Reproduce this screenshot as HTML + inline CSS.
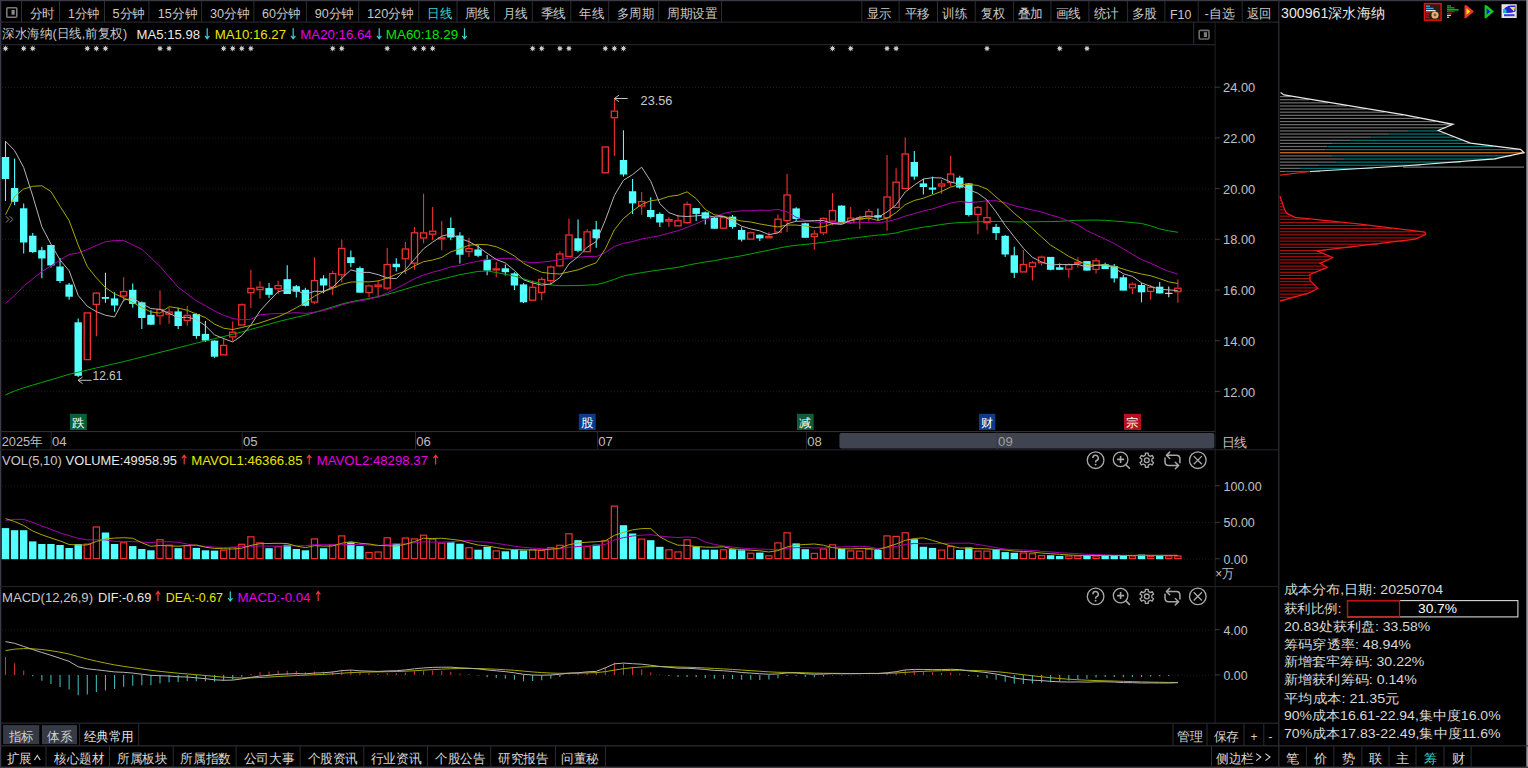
<!DOCTYPE html>
<html><head><meta charset="utf-8"><title>深水海纳</title>
<style>
html,body{margin:0;padding:0;background:#000;}
body{width:1528px;height:768px;overflow:hidden;position:relative;font-family:"Liberation Sans",sans-serif;}
svg{position:absolute;left:0;top:0;display:block;}
text{font-family:"Liberation Sans",sans-serif;}
</style></head><body>
<svg width="1528" height="768" viewBox="0 0 1528 768">
<rect x="0" y="0" width="1528" height="1.2" fill="#3a3b46"/>
<rect x="0" y="0" width="1.3" height="768" fill="#3a3b48"/>
<rect x="1526.3" y="0" width="1.7" height="768" fill="#9a9aa2"/>
<rect x="0" y="766.6" width="1528" height="1.4" fill="#3a3b46"/>
<rect x="0" y="21.6" width="1279" height="1" fill="#2c2d36"/>
<rect x="21" y="1" width="1" height="21" fill="#2c2d36"/>
<rect x="59" y="1" width="1" height="21" fill="#2c2d36"/>
<rect x="104" y="1" width="1" height="21" fill="#2c2d36"/>
<rect x="148.4" y="1" width="1" height="21" fill="#2c2d36"/>
<rect x="201.1" y="1" width="1" height="21" fill="#2c2d36"/>
<rect x="253.4" y="1" width="1" height="21" fill="#2c2d36"/>
<rect x="305.9" y="1" width="1" height="21" fill="#2c2d36"/>
<rect x="358.2" y="1" width="1" height="21" fill="#2c2d36"/>
<rect x="418.3" y="1" width="1" height="21" fill="#2c2d36"/>
<rect x="456.5" y="1" width="1" height="21" fill="#2c2d36"/>
<rect x="494" y="1" width="1" height="21" fill="#2c2d36"/>
<rect x="531.8" y="1" width="1" height="21" fill="#2c2d36"/>
<rect x="570.3" y="1" width="1" height="21" fill="#2c2d36"/>
<rect x="608.2" y="1" width="1" height="21" fill="#2c2d36"/>
<rect x="658.2" y="1" width="1" height="21" fill="#2c2d36"/>
<rect x="721" y="1" width="1" height="21" fill="#2c2d36"/>
<rect x="861.3" y="1" width="1" height="21" fill="#2c2d36"/>
<rect x="898.6" y="1" width="1" height="21" fill="#2c2d36"/>
<rect x="937" y="1" width="1" height="21" fill="#2c2d36"/>
<rect x="974.7" y="1" width="1" height="21" fill="#2c2d36"/>
<rect x="1013.1" y="1" width="1" height="21" fill="#2c2d36"/>
<rect x="1050.4" y="1" width="1" height="21" fill="#2c2d36"/>
<rect x="1088.4" y="1" width="1" height="21" fill="#2c2d36"/>
<rect x="1126.9" y="1" width="1" height="21" fill="#2c2d36"/>
<rect x="1164.4" y="1" width="1" height="21" fill="#2c2d36"/>
<rect x="1197.7" y="1" width="1" height="21" fill="#2c2d36"/>
<rect x="1241.7" y="1" width="1" height="21" fill="#2c2d36"/>
<rect x="1278.2" y="0" width="1.2" height="768" fill="#30313a"/>
<rect x="0" y="44.2" width="1215.5" height="1" fill="#2c2d36"/>
<rect x="1193.2" y="22" width="1" height="22.5" fill="#2c2d36"/>
<rect x="1214.6" y="22" width="1.1" height="701" fill="#1e1e22"/>
<line x1="2" y1="87.5" x2="1215" y2="87.5" stroke="#1c1c1c" stroke-width="1" stroke-dasharray="1,2"/>
<line x1="1215" y1="87.2" x2="1220" y2="87.2" stroke="#3a3a3a" stroke-width="1"/>
<line x1="2" y1="138.2" x2="1215" y2="138.2" stroke="#1c1c1c" stroke-width="1" stroke-dasharray="1,2"/>
<line x1="1215" y1="137.9" x2="1220" y2="137.9" stroke="#3a3a3a" stroke-width="1"/>
<line x1="2" y1="188.9" x2="1215" y2="188.9" stroke="#1c1c1c" stroke-width="1" stroke-dasharray="1,2"/>
<line x1="1215" y1="188.6" x2="1220" y2="188.6" stroke="#3a3a3a" stroke-width="1"/>
<line x1="2" y1="239.6" x2="1215" y2="239.6" stroke="#1c1c1c" stroke-width="1" stroke-dasharray="1,2"/>
<line x1="1215" y1="239.3" x2="1220" y2="239.3" stroke="#3a3a3a" stroke-width="1"/>
<line x1="2" y1="290.3" x2="1215" y2="290.3" stroke="#1c1c1c" stroke-width="1" stroke-dasharray="1,2"/>
<line x1="1215" y1="290" x2="1220" y2="290" stroke="#3a3a3a" stroke-width="1"/>
<line x1="2" y1="341" x2="1215" y2="341" stroke="#1c1c1c" stroke-width="1" stroke-dasharray="1,2"/>
<line x1="1215" y1="340.7" x2="1220" y2="340.7" stroke="#3a3a3a" stroke-width="1"/>
<line x1="2" y1="391.7" x2="1215" y2="391.7" stroke="#1c1c1c" stroke-width="1" stroke-dasharray="1,2"/>
<line x1="1215" y1="391.4" x2="1220" y2="391.4" stroke="#3a3a3a" stroke-width="1"/>
<rect x="0" y="431" width="1215" height="1.1" fill="#2e2f34"/>
<rect x="0" y="449.2" width="1279" height="1.1" fill="#242428"/>
<rect x="50.7" y="432" width="1" height="17" fill="#26272e"/>
<rect x="241.7" y="432" width="1" height="17" fill="#26272e"/>
<rect x="415" y="432" width="1" height="17" fill="#26272e"/>
<rect x="597" y="432" width="1" height="17" fill="#26272e"/>
<rect x="805.9" y="432" width="1" height="17" fill="#26272e"/>
<rect x="996.8" y="432" width="1" height="17" fill="#26272e"/>
<path d="M841.4,432.9 H1212.3 Q1214.3,432.9 1214.3,434.9 V446.6 Q1214.3,448.6 1212.3,448.6 H841.4 Q839.4,448.6 839.4,446.6 V434.9 Q839.4,432.9 841.4,432.9 Z" fill="#3f4450"/>
<line x1="2" y1="486.1" x2="1215" y2="486.1" stroke="#1c1c1c" stroke-width="1" stroke-dasharray="1,2"/>
<line x1="1215" y1="485.8" x2="1220" y2="485.8" stroke="#3a3a3a" stroke-width="1"/>
<line x1="2" y1="522.6" x2="1215" y2="522.6" stroke="#1c1c1c" stroke-width="1" stroke-dasharray="1,2"/>
<line x1="1215" y1="522.3" x2="1220" y2="522.3" stroke="#3a3a3a" stroke-width="1"/>
<line x1="2" y1="559.05" x2="1215" y2="559.05" stroke="#1c1c1c" stroke-width="1" stroke-dasharray="1,2"/>
<line x1="1215" y1="558.75" x2="1220" y2="558.75" stroke="#3a3a3a" stroke-width="1"/>
<rect x="0" y="586" width="1279" height="1.1" fill="#222226"/>
<line x1="2" y1="630" x2="1215" y2="630" stroke="#1c1c1c" stroke-width="1" stroke-dasharray="1,2"/>
<line x1="1215" y1="629.7" x2="1220" y2="629.7" stroke="#3a3a3a" stroke-width="1"/>
<line x1="2" y1="675.2" x2="1215" y2="675.2" stroke="#1c1c1c" stroke-width="1" stroke-dasharray="1,2"/>
<line x1="1215" y1="674.9" x2="1220" y2="674.9" stroke="#3a3a3a" stroke-width="1"/>
<rect x="0" y="722.6" width="1279" height="1.1" fill="#2c2d36"/>
<rect x="0" y="745.3" width="1528" height="1.1" fill="#33343c"/>
<rect x="3.1" y="725.1" width="36.2" height="19.1" fill="#353a45"/>
<rect x="41.9" y="725.1" width="35.1" height="19.1" fill="#353a45"/>
<rect x="79.1" y="723.5" width="1" height="22" fill="#2c2d36"/>
<rect x="138.2" y="723.5" width="1" height="22" fill="#2c2d36"/>
<rect x="1172.5" y="723.5" width="1" height="22" fill="#2c2d36"/>
<rect x="1206.5" y="723.5" width="1" height="22" fill="#2c2d36"/>
<rect x="1243.5" y="723.5" width="1" height="22" fill="#2c2d36"/>
<rect x="1263.3" y="723.5" width="1" height="22" fill="#2c2d36"/>
<rect x="45.5" y="746.5" width="1" height="20" fill="#2c2d36"/>
<rect x="109" y="746.5" width="1" height="20" fill="#2c2d36"/>
<rect x="172.7" y="746.5" width="1" height="20" fill="#2c2d36"/>
<rect x="235.6" y="746.5" width="1" height="20" fill="#2c2d36"/>
<rect x="299.6" y="746.5" width="1" height="20" fill="#2c2d36"/>
<rect x="363.3" y="746.5" width="1" height="20" fill="#2c2d36"/>
<rect x="426.9" y="746.5" width="1" height="20" fill="#2c2d36"/>
<rect x="490.2" y="746.5" width="1" height="20" fill="#2c2d36"/>
<rect x="554.9" y="746.5" width="1" height="20" fill="#2c2d36"/>
<rect x="604.9" y="746.5" width="1" height="20" fill="#2c2d36"/>
<rect x="1211" y="746.5" width="1" height="20" fill="#2c2d36"/>
<rect x="1305.9" y="746.5" width="1" height="20" fill="#2c2d36"/>
<rect x="1333.4" y="746.5" width="1" height="20" fill="#2c2d36"/>
<rect x="1361.4" y="746.5" width="1" height="20" fill="#2c2d36"/>
<rect x="1388.5" y="746.5" width="1" height="20" fill="#2c2d36"/>
<rect x="1415.5" y="746.5" width="1" height="20" fill="#2c2d36"/>
<rect x="1443.5" y="746.5" width="1" height="20" fill="#2c2d36"/>
<rect x="1470.6" y="746.5" width="1" height="20" fill="#2c2d36"/>
<line x1="5.5" y1="141.2" x2="5.5" y2="201" stroke="#54ffff" stroke-width="1.1"/>
<rect x="1.8" y="157" width="7.4" height="22" fill="#54ffff"/>
<line x1="14.59" y1="158.6" x2="14.59" y2="205" stroke="#54ffff" stroke-width="1.1"/>
<rect x="10.89" y="188" width="7.4" height="13.8" fill="#54ffff"/>
<line x1="23.68" y1="203.4" x2="23.68" y2="253.5" stroke="#54ffff" stroke-width="1.1"/>
<rect x="19.98" y="208.3" width="7.4" height="34.2" fill="#54ffff"/>
<line x1="32.76" y1="233" x2="32.76" y2="253" stroke="#54ffff" stroke-width="1.1"/>
<rect x="29.06" y="235.7" width="7.4" height="16.4" fill="#54ffff"/>
<line x1="41.85" y1="246.7" x2="41.85" y2="278.3" stroke="#54ffff" stroke-width="1.1"/>
<rect x="38.15" y="250.2" width="7.4" height="8.3" fill="#54ffff"/>
<line x1="50.94" y1="245" x2="50.94" y2="267.5" stroke="#54ffff" stroke-width="1.1"/>
<rect x="47.24" y="245" width="7.4" height="20.4" fill="#54ffff"/>
<line x1="60.03" y1="258" x2="60.03" y2="283" stroke="#54ffff" stroke-width="1.1"/>
<rect x="56.33" y="266.5" width="7.4" height="14.5" fill="#54ffff"/>
<line x1="69.12" y1="283" x2="69.12" y2="299.8" stroke="#54ffff" stroke-width="1.1"/>
<rect x="65.42" y="284.6" width="7.4" height="12.1" fill="#54ffff"/>
<line x1="78.2" y1="318.5" x2="78.2" y2="376.9" stroke="#54ffff" stroke-width="1.1"/>
<rect x="74.5" y="322.3" width="7.4" height="53.5" fill="#54ffff"/>
<rect x="84.19" y="312.9" width="6.2" height="46.7" fill="none" stroke="#f03030" stroke-width="1.3"/>
<line x1="96.38" y1="291.9" x2="96.38" y2="292.5" stroke="#f03030" stroke-width="1.1"/>
<line x1="96.38" y1="305" x2="96.38" y2="336.3" stroke="#f03030" stroke-width="1.1"/>
<rect x="93.28" y="293.1" width="6.2" height="11.3" fill="none" stroke="#f03030" stroke-width="1.3"/>
<line x1="105.47" y1="272.7" x2="105.47" y2="302.9" stroke="#54ffff" stroke-width="1.1"/>
<rect x="101.77" y="297" width="7.4" height="1.8" fill="#54ffff"/>
<line x1="114.56" y1="292.2" x2="114.56" y2="311.7" stroke="#54ffff" stroke-width="1.1"/>
<rect x="110.86" y="298.4" width="7.4" height="7.1" fill="#54ffff"/>
<line x1="123.64" y1="277.3" x2="123.64" y2="291" stroke="#f03030" stroke-width="1.1"/>
<line x1="123.64" y1="296.6" x2="123.64" y2="301.6" stroke="#f03030" stroke-width="1.1"/>
<rect x="120.54" y="291.6" width="6.2" height="4.4" fill="none" stroke="#f03030" stroke-width="1.3"/>
<line x1="132.73" y1="283.6" x2="132.73" y2="307.8" stroke="#54ffff" stroke-width="1.1"/>
<rect x="129.03" y="289.8" width="7.4" height="14.1" fill="#54ffff"/>
<line x1="141.82" y1="301.6" x2="141.82" y2="328.9" stroke="#54ffff" stroke-width="1.1"/>
<rect x="138.12" y="302.3" width="7.4" height="15.7" fill="#54ffff"/>
<line x1="150.91" y1="310.2" x2="150.91" y2="325" stroke="#54ffff" stroke-width="1.1"/>
<rect x="147.21" y="314.8" width="7.4" height="9.9" fill="#54ffff"/>
<line x1="160" y1="290.6" x2="160" y2="309" stroke="#f03030" stroke-width="1.1"/>
<line x1="160" y1="316.4" x2="160" y2="324.7" stroke="#f03030" stroke-width="1.1"/>
<rect x="156.9" y="309.6" width="6.2" height="6.2" fill="none" stroke="#f03030" stroke-width="1.3"/>
<line x1="169.08" y1="307.8" x2="169.08" y2="311.4" stroke="#f03030" stroke-width="1.1"/>
<line x1="169.08" y1="314.8" x2="169.08" y2="323.75" stroke="#f03030" stroke-width="1.1"/>
<rect x="165.98" y="312" width="6.2" height="2.2" fill="none" stroke="#f03030" stroke-width="1.3"/>
<line x1="178.17" y1="307.8" x2="178.17" y2="328.9" stroke="#54ffff" stroke-width="1.1"/>
<rect x="174.47" y="311.4" width="7.4" height="14.6" fill="#54ffff"/>
<line x1="187.26" y1="306" x2="187.26" y2="314.8" stroke="#f03030" stroke-width="1.1"/>
<line x1="187.26" y1="321" x2="187.26" y2="325.8" stroke="#f03030" stroke-width="1.1"/>
<rect x="184.16" y="315.4" width="6.2" height="5" fill="none" stroke="#f03030" stroke-width="1.3"/>
<line x1="196.35" y1="313.3" x2="196.35" y2="338.75" stroke="#54ffff" stroke-width="1.1"/>
<rect x="192.65" y="314" width="7.4" height="22" fill="#54ffff"/>
<line x1="205.44" y1="321" x2="205.44" y2="341.9" stroke="#54ffff" stroke-width="1.1"/>
<rect x="201.74" y="333.9" width="7.4" height="6.7" fill="#54ffff"/>
<line x1="214.52" y1="340.3" x2="214.52" y2="357.8" stroke="#54ffff" stroke-width="1.1"/>
<rect x="210.82" y="340.6" width="7.4" height="16.1" fill="#54ffff"/>
<line x1="223.61" y1="338.6" x2="223.61" y2="344.8" stroke="#f03030" stroke-width="1.1"/>
<rect x="220.51" y="345.4" width="6.2" height="9.5" fill="none" stroke="#f03030" stroke-width="1.3"/>
<line x1="232.7" y1="321.4" x2="232.7" y2="331.6" stroke="#f03030" stroke-width="1.1"/>
<line x1="232.7" y1="337.5" x2="232.7" y2="341.25" stroke="#f03030" stroke-width="1.1"/>
<rect x="229.6" y="332.2" width="6.2" height="4.7" fill="none" stroke="#f03030" stroke-width="1.3"/>
<line x1="241.79" y1="303.4" x2="241.79" y2="304.2" stroke="#f03030" stroke-width="1.1"/>
<rect x="238.69" y="304.8" width="6.2" height="20.2" fill="none" stroke="#f03030" stroke-width="1.3"/>
<line x1="250.88" y1="269.8" x2="250.88" y2="287.8" stroke="#f03030" stroke-width="1.1"/>
<line x1="250.88" y1="293.3" x2="250.88" y2="308.1" stroke="#f03030" stroke-width="1.1"/>
<rect x="247.78" y="288.4" width="6.2" height="4.3" fill="none" stroke="#f03030" stroke-width="1.3"/>
<line x1="259.96" y1="281.25" x2="259.96" y2="286.6" stroke="#f03030" stroke-width="1.1"/>
<line x1="259.96" y1="290.2" x2="259.96" y2="298.4" stroke="#f03030" stroke-width="1.1"/>
<rect x="256.86" y="287.2" width="6.2" height="2.4" fill="none" stroke="#f03030" stroke-width="1.3"/>
<line x1="269.05" y1="283.1" x2="269.05" y2="298" stroke="#54ffff" stroke-width="1.1"/>
<rect x="265.35" y="288.1" width="7.4" height="6.7" fill="#54ffff"/>
<line x1="278.14" y1="280.8" x2="278.14" y2="285" stroke="#f03030" stroke-width="1.1"/>
<line x1="278.14" y1="289.4" x2="278.14" y2="294" stroke="#f03030" stroke-width="1.1"/>
<rect x="275.04" y="285.6" width="6.2" height="3.2" fill="none" stroke="#f03030" stroke-width="1.3"/>
<line x1="287.23" y1="265.2" x2="287.23" y2="294" stroke="#54ffff" stroke-width="1.1"/>
<rect x="283.53" y="279.2" width="7.4" height="14.8" fill="#54ffff"/>
<line x1="296.32" y1="285" x2="296.32" y2="297.5" stroke="#54ffff" stroke-width="1.1"/>
<rect x="292.62" y="286.25" width="7.4" height="5.45" fill="#54ffff"/>
<line x1="305.4" y1="287.8" x2="305.4" y2="306.6" stroke="#54ffff" stroke-width="1.1"/>
<rect x="301.7" y="289.8" width="7.4" height="16" fill="#54ffff"/>
<line x1="314.49" y1="257.3" x2="314.49" y2="280" stroke="#f03030" stroke-width="1.1"/>
<line x1="314.49" y1="302.7" x2="314.49" y2="304.2" stroke="#f03030" stroke-width="1.1"/>
<rect x="311.39" y="280.6" width="6.2" height="21.5" fill="none" stroke="#f03030" stroke-width="1.3"/>
<line x1="323.58" y1="275.3" x2="323.58" y2="293.3" stroke="#54ffff" stroke-width="1.1"/>
<rect x="319.88" y="278.4" width="7.4" height="7.1" fill="#54ffff"/>
<line x1="332.67" y1="271" x2="332.67" y2="273" stroke="#f03030" stroke-width="1.1"/>
<line x1="332.67" y1="287.8" x2="332.67" y2="295.3" stroke="#f03030" stroke-width="1.1"/>
<rect x="329.57" y="273.6" width="6.2" height="13.6" fill="none" stroke="#f03030" stroke-width="1.3"/>
<line x1="341.76" y1="239.5" x2="341.76" y2="247.8" stroke="#f03030" stroke-width="1.1"/>
<line x1="341.76" y1="275.5" x2="341.76" y2="282.5" stroke="#f03030" stroke-width="1.1"/>
<rect x="338.66" y="248.4" width="6.2" height="26.5" fill="none" stroke="#f03030" stroke-width="1.3"/>
<line x1="350.84" y1="250.5" x2="350.84" y2="267.2" stroke="#54ffff" stroke-width="1.1"/>
<rect x="347.14" y="257.2" width="7.4" height="5.8" fill="#54ffff"/>
<line x1="359.93" y1="266.6" x2="359.93" y2="292.7" stroke="#54ffff" stroke-width="1.1"/>
<rect x="356.23" y="268.1" width="7.4" height="24.6" fill="#54ffff"/>
<line x1="369.02" y1="284.4" x2="369.02" y2="285.3" stroke="#f03030" stroke-width="1.1"/>
<line x1="369.02" y1="293.1" x2="369.02" y2="297.3" stroke="#f03030" stroke-width="1.1"/>
<rect x="365.92" y="285.9" width="6.2" height="6.6" fill="none" stroke="#f03030" stroke-width="1.3"/>
<line x1="378.11" y1="280.6" x2="378.11" y2="284.4" stroke="#f03030" stroke-width="1.1"/>
<line x1="378.11" y1="287.2" x2="378.11" y2="298.1" stroke="#f03030" stroke-width="1.1"/>
<rect x="375.01" y="285" width="6.2" height="1.6" fill="none" stroke="#f03030" stroke-width="1.3"/>
<line x1="387.2" y1="248.1" x2="387.2" y2="264" stroke="#f03030" stroke-width="1.1"/>
<line x1="387.2" y1="288.75" x2="387.2" y2="290.3" stroke="#f03030" stroke-width="1.1"/>
<rect x="384.1" y="264.6" width="6.2" height="23.55" fill="none" stroke="#f03030" stroke-width="1.3"/>
<line x1="396.28" y1="258.3" x2="396.28" y2="271.6" stroke="#54ffff" stroke-width="1.1"/>
<rect x="392.58" y="263.75" width="7.4" height="3.45" fill="#54ffff"/>
<line x1="405.37" y1="241.9" x2="405.37" y2="248.4" stroke="#f03030" stroke-width="1.1"/>
<line x1="405.37" y1="259.4" x2="405.37" y2="273.9" stroke="#f03030" stroke-width="1.1"/>
<rect x="402.27" y="249" width="6.2" height="9.8" fill="none" stroke="#f03030" stroke-width="1.3"/>
<line x1="414.46" y1="227" x2="414.46" y2="232.2" stroke="#f03030" stroke-width="1.1"/>
<line x1="414.46" y1="263.75" x2="414.46" y2="269.7" stroke="#f03030" stroke-width="1.1"/>
<rect x="411.36" y="232.8" width="6.2" height="30.35" fill="none" stroke="#f03030" stroke-width="1.3"/>
<line x1="423.55" y1="193.75" x2="423.55" y2="232.3" stroke="#f03030" stroke-width="1.1"/>
<line x1="423.55" y1="238.6" x2="423.55" y2="243.3" stroke="#f03030" stroke-width="1.1"/>
<rect x="420.45" y="232.9" width="6.2" height="5.1" fill="none" stroke="#f03030" stroke-width="1.3"/>
<line x1="432.64" y1="206.9" x2="432.64" y2="230.6" stroke="#f03030" stroke-width="1.1"/>
<line x1="432.64" y1="234.8" x2="432.64" y2="240.3" stroke="#f03030" stroke-width="1.1"/>
<rect x="429.54" y="231.2" width="6.2" height="3" fill="none" stroke="#f03030" stroke-width="1.3"/>
<line x1="441.72" y1="221" x2="441.72" y2="237.2" stroke="#f03030" stroke-width="1.1"/>
<line x1="441.72" y1="239.5" x2="441.72" y2="250.3" stroke="#f03030" stroke-width="1.1"/>
<rect x="438.62" y="237.8" width="6.2" height="1.1" fill="none" stroke="#f03030" stroke-width="1.3"/>
<line x1="450.81" y1="217.5" x2="450.81" y2="240.3" stroke="#54ffff" stroke-width="1.1"/>
<rect x="447.11" y="228" width="7.4" height="9.5" fill="#54ffff"/>
<line x1="459.9" y1="232.3" x2="459.9" y2="263.6" stroke="#54ffff" stroke-width="1.1"/>
<rect x="456.2" y="235.5" width="7.4" height="19.2" fill="#54ffff"/>
<line x1="468.99" y1="237.8" x2="468.99" y2="248" stroke="#f03030" stroke-width="1.1"/>
<line x1="468.99" y1="252.2" x2="468.99" y2="256.9" stroke="#f03030" stroke-width="1.1"/>
<rect x="465.89" y="248.6" width="6.2" height="3" fill="none" stroke="#f03030" stroke-width="1.3"/>
<line x1="478.08" y1="244.8" x2="478.08" y2="257.3" stroke="#54ffff" stroke-width="1.1"/>
<rect x="474.38" y="249.5" width="7.4" height="6.3" fill="#54ffff"/>
<line x1="487.16" y1="255" x2="487.16" y2="275.3" stroke="#54ffff" stroke-width="1.1"/>
<rect x="483.46" y="259.7" width="7.4" height="10.9" fill="#54ffff"/>
<line x1="496.25" y1="262" x2="496.25" y2="268.3" stroke="#f03030" stroke-width="1.1"/>
<line x1="496.25" y1="269.8" x2="496.25" y2="277.2" stroke="#f03030" stroke-width="1.1"/>
<rect x="493.15" y="268.9" width="6.2" height="1" fill="none" stroke="#f03030" stroke-width="1.3"/>
<line x1="505.34" y1="264.4" x2="505.34" y2="275.6" stroke="#54ffff" stroke-width="1.1"/>
<rect x="501.64" y="268.3" width="7.4" height="3.9" fill="#54ffff"/>
<line x1="514.43" y1="272.2" x2="514.43" y2="290" stroke="#54ffff" stroke-width="1.1"/>
<rect x="510.73" y="273.4" width="7.4" height="12.1" fill="#54ffff"/>
<line x1="523.52" y1="283.1" x2="523.52" y2="303.1" stroke="#54ffff" stroke-width="1.1"/>
<rect x="519.82" y="284.4" width="7.4" height="17.9" fill="#54ffff"/>
<line x1="532.6" y1="280.5" x2="532.6" y2="286.7" stroke="#f03030" stroke-width="1.1"/>
<rect x="529.5" y="287.3" width="6.2" height="12.9" fill="none" stroke="#f03030" stroke-width="1.3"/>
<line x1="541.69" y1="277.3" x2="541.69" y2="278.9" stroke="#f03030" stroke-width="1.1"/>
<line x1="541.69" y1="293" x2="541.69" y2="300.3" stroke="#f03030" stroke-width="1.1"/>
<rect x="538.59" y="279.5" width="6.2" height="12.9" fill="none" stroke="#f03030" stroke-width="1.3"/>
<line x1="550.78" y1="265.6" x2="550.78" y2="266.4" stroke="#f03030" stroke-width="1.1"/>
<line x1="550.78" y1="281.25" x2="550.78" y2="285.2" stroke="#f03030" stroke-width="1.1"/>
<rect x="547.68" y="267" width="6.2" height="13.65" fill="none" stroke="#f03030" stroke-width="1.3"/>
<line x1="559.87" y1="251.25" x2="559.87" y2="253.4" stroke="#f03030" stroke-width="1.1"/>
<line x1="559.87" y1="266.4" x2="559.87" y2="267.2" stroke="#f03030" stroke-width="1.1"/>
<rect x="556.77" y="254" width="6.2" height="11.8" fill="none" stroke="#f03030" stroke-width="1.3"/>
<line x1="568.96" y1="218.4" x2="568.96" y2="234.4" stroke="#f03030" stroke-width="1.1"/>
<rect x="565.86" y="235" width="6.2" height="21.4" fill="none" stroke="#f03030" stroke-width="1.3"/>
<line x1="578.04" y1="219.5" x2="578.04" y2="252.3" stroke="#54ffff" stroke-width="1.1"/>
<rect x="574.34" y="238.3" width="7.4" height="12.5" fill="#54ffff"/>
<line x1="587.13" y1="228.9" x2="587.13" y2="231.25" stroke="#f03030" stroke-width="1.1"/>
<rect x="584.03" y="231.85" width="6.2" height="19.85" fill="none" stroke="#f03030" stroke-width="1.3"/>
<line x1="596.22" y1="221.1" x2="596.22" y2="247.7" stroke="#54ffff" stroke-width="1.1"/>
<rect x="592.52" y="229.4" width="7.4" height="8.9" fill="#54ffff"/>
<rect x="602.21" y="147" width="6.2" height="25.8" fill="none" stroke="#f03030" stroke-width="1.3"/>
<line x1="614.4" y1="98" x2="614.4" y2="110.5" stroke="#f03030" stroke-width="1.1"/>
<line x1="614.4" y1="118.3" x2="614.4" y2="155.8" stroke="#f03030" stroke-width="1.1"/>
<rect x="611.3" y="111.1" width="6.2" height="6.6" fill="none" stroke="#f03030" stroke-width="1.3"/>
<line x1="623.48" y1="130.3" x2="623.48" y2="176.6" stroke="#54ffff" stroke-width="1.1"/>
<rect x="619.78" y="160" width="7.4" height="14.5" fill="#54ffff"/>
<line x1="632.57" y1="179.1" x2="632.57" y2="213.9" stroke="#54ffff" stroke-width="1.1"/>
<rect x="628.87" y="191.25" width="7.4" height="12.15" fill="#54ffff"/>
<line x1="641.66" y1="192" x2="641.66" y2="201" stroke="#f03030" stroke-width="1.1"/>
<line x1="641.66" y1="206.6" x2="641.66" y2="214.7" stroke="#f03030" stroke-width="1.1"/>
<rect x="638.56" y="201.6" width="6.2" height="4.4" fill="none" stroke="#f03030" stroke-width="1.3"/>
<line x1="650.75" y1="197.2" x2="650.75" y2="218.6" stroke="#54ffff" stroke-width="1.1"/>
<rect x="647.05" y="210" width="7.4" height="7" fill="#54ffff"/>
<line x1="659.84" y1="212.3" x2="659.84" y2="226.9" stroke="#54ffff" stroke-width="1.1"/>
<rect x="656.14" y="213.9" width="7.4" height="8.6" fill="#54ffff"/>
<line x1="668.92" y1="217" x2="668.92" y2="219" stroke="#f03030" stroke-width="1.1"/>
<line x1="668.92" y1="221.7" x2="668.92" y2="226.9" stroke="#f03030" stroke-width="1.1"/>
<rect x="665.82" y="219.6" width="6.2" height="1.5" fill="none" stroke="#f03030" stroke-width="1.3"/>
<line x1="678.01" y1="214.7" x2="678.01" y2="220.2" stroke="#f03030" stroke-width="1.1"/>
<rect x="674.91" y="220.8" width="6.2" height="5" fill="none" stroke="#f03030" stroke-width="1.3"/>
<line x1="687.1" y1="201.4" x2="687.1" y2="203.75" stroke="#f03030" stroke-width="1.1"/>
<line x1="687.1" y1="223.3" x2="687.1" y2="224" stroke="#f03030" stroke-width="1.1"/>
<rect x="684" y="204.35" width="6.2" height="18.35" fill="none" stroke="#f03030" stroke-width="1.3"/>
<line x1="696.19" y1="208.1" x2="696.19" y2="220.9" stroke="#54ffff" stroke-width="1.1"/>
<rect x="692.49" y="208.1" width="7.4" height="5.8" fill="#54ffff"/>
<line x1="705.28" y1="211.6" x2="705.28" y2="224.4" stroke="#54ffff" stroke-width="1.1"/>
<rect x="701.58" y="212.3" width="7.4" height="6.3" fill="#54ffff"/>
<line x1="714.36" y1="217" x2="714.36" y2="228.75" stroke="#54ffff" stroke-width="1.1"/>
<rect x="710.66" y="217.8" width="7.4" height="10.95" fill="#54ffff"/>
<line x1="723.45" y1="216.25" x2="723.45" y2="217" stroke="#f03030" stroke-width="1.1"/>
<rect x="720.35" y="217.6" width="6.2" height="10.55" fill="none" stroke="#f03030" stroke-width="1.3"/>
<line x1="732.54" y1="215" x2="732.54" y2="228.75" stroke="#54ffff" stroke-width="1.1"/>
<rect x="728.84" y="216.6" width="7.4" height="10.3" fill="#54ffff"/>
<line x1="741.63" y1="227.2" x2="741.63" y2="241.6" stroke="#54ffff" stroke-width="1.1"/>
<rect x="737.93" y="230" width="7.4" height="9.7" fill="#54ffff"/>
<line x1="750.72" y1="231.6" x2="750.72" y2="232.2" stroke="#f03030" stroke-width="1.1"/>
<rect x="747.62" y="232.8" width="6.2" height="6.3" fill="none" stroke="#f03030" stroke-width="1.3"/>
<line x1="759.8" y1="234.2" x2="759.8" y2="241" stroke="#54ffff" stroke-width="1.1"/>
<rect x="756.1" y="234.7" width="7.4" height="3.7" fill="#54ffff"/>
<line x1="768.89" y1="232.2" x2="768.89" y2="235.8" stroke="#f03030" stroke-width="1.1"/>
<rect x="765.79" y="236.4" width="6.2" height="1.4" fill="none" stroke="#f03030" stroke-width="1.3"/>
<line x1="777.98" y1="214.4" x2="777.98" y2="218.6" stroke="#f03030" stroke-width="1.1"/>
<rect x="774.88" y="219.2" width="6.2" height="12.9" fill="none" stroke="#f03030" stroke-width="1.3"/>
<line x1="787.07" y1="174" x2="787.07" y2="194.4" stroke="#f03030" stroke-width="1.1"/>
<line x1="787.07" y1="221.25" x2="787.07" y2="231.9" stroke="#f03030" stroke-width="1.1"/>
<rect x="783.97" y="195" width="6.2" height="25.65" fill="none" stroke="#f03030" stroke-width="1.3"/>
<line x1="796.16" y1="207.2" x2="796.16" y2="221" stroke="#54ffff" stroke-width="1.1"/>
<rect x="792.46" y="208.4" width="7.4" height="10.6" fill="#54ffff"/>
<line x1="805.24" y1="222.8" x2="805.24" y2="237.8" stroke="#54ffff" stroke-width="1.1"/>
<rect x="801.54" y="223.3" width="7.4" height="14.5" fill="#54ffff"/>
<line x1="814.33" y1="230.3" x2="814.33" y2="233.4" stroke="#f03030" stroke-width="1.1"/>
<line x1="814.33" y1="237.3" x2="814.33" y2="249.8" stroke="#f03030" stroke-width="1.1"/>
<rect x="811.23" y="234" width="6.2" height="2.7" fill="none" stroke="#f03030" stroke-width="1.3"/>
<line x1="823.42" y1="217.5" x2="823.42" y2="217.8" stroke="#f03030" stroke-width="1.1"/>
<line x1="823.42" y1="233.4" x2="823.42" y2="235.3" stroke="#f03030" stroke-width="1.1"/>
<rect x="820.32" y="218.4" width="6.2" height="14.4" fill="none" stroke="#f03030" stroke-width="1.3"/>
<line x1="832.51" y1="193.1" x2="832.51" y2="210" stroke="#f03030" stroke-width="1.1"/>
<line x1="832.51" y1="221.7" x2="832.51" y2="225.3" stroke="#f03030" stroke-width="1.1"/>
<rect x="829.41" y="210.6" width="6.2" height="10.5" fill="none" stroke="#f03030" stroke-width="1.3"/>
<line x1="841.6" y1="205.3" x2="841.6" y2="223.3" stroke="#54ffff" stroke-width="1.1"/>
<rect x="837.9" y="205.6" width="7.4" height="17.7" fill="#54ffff"/>
<line x1="850.68" y1="206.9" x2="850.68" y2="217.5" stroke="#f03030" stroke-width="1.1"/>
<line x1="850.68" y1="223.3" x2="850.68" y2="224" stroke="#f03030" stroke-width="1.1"/>
<rect x="847.58" y="218.1" width="6.2" height="4.6" fill="none" stroke="#f03030" stroke-width="1.3"/>
<line x1="859.77" y1="215.6" x2="859.77" y2="217.5" stroke="#f03030" stroke-width="1.1"/>
<line x1="859.77" y1="218.75" x2="859.77" y2="229.2" stroke="#f03030" stroke-width="1.1"/>
<rect x="856.67" y="218.1" width="6.2" height="1" fill="none" stroke="#f03030" stroke-width="1.3"/>
<line x1="868.86" y1="208.9" x2="868.86" y2="211" stroke="#f03030" stroke-width="1.1"/>
<line x1="868.86" y1="217.5" x2="868.86" y2="221.4" stroke="#f03030" stroke-width="1.1"/>
<rect x="865.76" y="211.6" width="6.2" height="5.3" fill="none" stroke="#f03030" stroke-width="1.3"/>
<line x1="877.95" y1="208.4" x2="877.95" y2="220.6" stroke="#54ffff" stroke-width="1.1"/>
<rect x="874.25" y="215.2" width="7.4" height="2.3" fill="#54ffff"/>
<line x1="887.04" y1="155" x2="887.04" y2="196.4" stroke="#f03030" stroke-width="1.1"/>
<line x1="887.04" y1="218.3" x2="887.04" y2="230.8" stroke="#f03030" stroke-width="1.1"/>
<rect x="883.94" y="197" width="6.2" height="20.7" fill="none" stroke="#f03030" stroke-width="1.3"/>
<line x1="896.12" y1="168.3" x2="896.12" y2="181.6" stroke="#f03030" stroke-width="1.1"/>
<rect x="893.02" y="182.2" width="6.2" height="25.3" fill="none" stroke="#f03030" stroke-width="1.3"/>
<line x1="905.21" y1="137.5" x2="905.21" y2="153.4" stroke="#f03030" stroke-width="1.1"/>
<rect x="902.11" y="154" width="6.2" height="34.5" fill="none" stroke="#f03030" stroke-width="1.3"/>
<line x1="914.3" y1="151.1" x2="914.3" y2="179.7" stroke="#54ffff" stroke-width="1.1"/>
<rect x="910.6" y="162" width="7.4" height="14.6" fill="#54ffff"/>
<line x1="923.39" y1="178.75" x2="923.39" y2="194.4" stroke="#54ffff" stroke-width="1.1"/>
<rect x="919.69" y="183.4" width="7.4" height="3.6" fill="#54ffff"/>
<line x1="932.48" y1="176.6" x2="932.48" y2="194.1" stroke="#54ffff" stroke-width="1.1"/>
<rect x="928.78" y="187.5" width="7.4" height="2.2" fill="#54ffff"/>
<line x1="941.56" y1="179.7" x2="941.56" y2="183.4" stroke="#f03030" stroke-width="1.1"/>
<line x1="941.56" y1="186.6" x2="941.56" y2="193.75" stroke="#f03030" stroke-width="1.1"/>
<rect x="938.46" y="184" width="6.2" height="2" fill="none" stroke="#f03030" stroke-width="1.3"/>
<line x1="950.65" y1="155.8" x2="950.65" y2="173.4" stroke="#f03030" stroke-width="1.1"/>
<line x1="950.65" y1="183.1" x2="950.65" y2="186.6" stroke="#f03030" stroke-width="1.1"/>
<rect x="947.55" y="174" width="6.2" height="8.5" fill="none" stroke="#f03030" stroke-width="1.3"/>
<line x1="959.74" y1="175.8" x2="959.74" y2="188.8" stroke="#54ffff" stroke-width="1.1"/>
<rect x="956.04" y="177.6" width="7.4" height="10" fill="#54ffff"/>
<line x1="968.83" y1="183.1" x2="968.83" y2="216.6" stroke="#54ffff" stroke-width="1.1"/>
<rect x="965.13" y="183.4" width="7.4" height="31.6" fill="#54ffff"/>
<line x1="977.92" y1="206.1" x2="977.92" y2="206.9" stroke="#f03030" stroke-width="1.1"/>
<line x1="977.92" y1="215" x2="977.92" y2="234.2" stroke="#f03030" stroke-width="1.1"/>
<rect x="974.82" y="207.5" width="6.2" height="6.9" fill="none" stroke="#f03030" stroke-width="1.3"/>
<line x1="987" y1="200.3" x2="987" y2="217" stroke="#f03030" stroke-width="1.1"/>
<line x1="987" y1="223.3" x2="987" y2="230.3" stroke="#f03030" stroke-width="1.1"/>
<rect x="983.9" y="217.6" width="6.2" height="5.1" fill="none" stroke="#f03030" stroke-width="1.3"/>
<line x1="996.09" y1="224" x2="996.09" y2="240" stroke="#54ffff" stroke-width="1.1"/>
<rect x="992.39" y="226.9" width="7.4" height="6.2" fill="#54ffff"/>
<line x1="1005.18" y1="235" x2="1005.18" y2="256.9" stroke="#54ffff" stroke-width="1.1"/>
<rect x="1001.48" y="235.8" width="7.4" height="18.7" fill="#54ffff"/>
<line x1="1014.27" y1="246.7" x2="1014.27" y2="278" stroke="#54ffff" stroke-width="1.1"/>
<rect x="1010.57" y="255.3" width="7.4" height="17.5" fill="#54ffff"/>
<line x1="1023.36" y1="250" x2="1023.36" y2="263.9" stroke="#f03030" stroke-width="1.1"/>
<rect x="1020.26" y="264.5" width="6.2" height="7.4" fill="none" stroke="#f03030" stroke-width="1.3"/>
<line x1="1032.44" y1="261.1" x2="1032.44" y2="262.2" stroke="#f03030" stroke-width="1.1"/>
<line x1="1032.44" y1="267.3" x2="1032.44" y2="280.6" stroke="#f03030" stroke-width="1.1"/>
<rect x="1029.34" y="262.8" width="6.2" height="3.9" fill="none" stroke="#f03030" stroke-width="1.3"/>
<line x1="1041.53" y1="255.6" x2="1041.53" y2="256.5" stroke="#f03030" stroke-width="1.1"/>
<line x1="1041.53" y1="263.4" x2="1041.53" y2="265.6" stroke="#f03030" stroke-width="1.1"/>
<rect x="1038.43" y="257.1" width="6.2" height="5.7" fill="none" stroke="#f03030" stroke-width="1.3"/>
<line x1="1050.62" y1="256.9" x2="1050.62" y2="270.2" stroke="#54ffff" stroke-width="1.1"/>
<rect x="1046.92" y="256.9" width="7.4" height="12.9" fill="#54ffff"/>
<line x1="1059.71" y1="263.6" x2="1059.71" y2="269.8" stroke="#54ffff" stroke-width="1.1"/>
<rect x="1056.01" y="267.3" width="7.4" height="2.5" fill="#54ffff"/>
<line x1="1068.8" y1="263.4" x2="1068.8" y2="264.2" stroke="#f03030" stroke-width="1.1"/>
<line x1="1068.8" y1="269.8" x2="1068.8" y2="277.8" stroke="#f03030" stroke-width="1.1"/>
<rect x="1065.7" y="264.8" width="6.2" height="4.4" fill="none" stroke="#f03030" stroke-width="1.3"/>
<line x1="1077.88" y1="257.2" x2="1077.88" y2="261.7" stroke="#f03030" stroke-width="1.1"/>
<line x1="1077.88" y1="264.2" x2="1077.88" y2="267.6" stroke="#f03030" stroke-width="1.1"/>
<rect x="1074.78" y="262.3" width="6.2" height="1.3" fill="none" stroke="#f03030" stroke-width="1.3"/>
<line x1="1086.97" y1="261.1" x2="1086.97" y2="270.6" stroke="#54ffff" stroke-width="1.1"/>
<rect x="1083.27" y="261.1" width="7.4" height="9.5" fill="#54ffff"/>
<line x1="1096.06" y1="258" x2="1096.06" y2="260.2" stroke="#f03030" stroke-width="1.1"/>
<line x1="1096.06" y1="270" x2="1096.06" y2="273.4" stroke="#f03030" stroke-width="1.1"/>
<rect x="1092.96" y="260.8" width="6.2" height="8.6" fill="none" stroke="#f03030" stroke-width="1.3"/>
<line x1="1105.15" y1="262.8" x2="1105.15" y2="269.1" stroke="#54ffff" stroke-width="1.1"/>
<rect x="1101.45" y="264.2" width="7.4" height="4.9" fill="#54ffff"/>
<line x1="1114.24" y1="263.9" x2="1114.24" y2="282.5" stroke="#54ffff" stroke-width="1.1"/>
<rect x="1110.54" y="266.1" width="7.4" height="12.3" fill="#54ffff"/>
<line x1="1123.32" y1="275" x2="1123.32" y2="290.6" stroke="#54ffff" stroke-width="1.1"/>
<rect x="1119.62" y="277.3" width="7.4" height="13.3" fill="#54ffff"/>
<line x1="1132.41" y1="282.3" x2="1132.41" y2="283.6" stroke="#f03030" stroke-width="1.1"/>
<line x1="1132.41" y1="288.4" x2="1132.41" y2="294" stroke="#f03030" stroke-width="1.1"/>
<rect x="1129.31" y="284.2" width="6.2" height="3.6" fill="none" stroke="#f03030" stroke-width="1.3"/>
<line x1="1141.5" y1="282.8" x2="1141.5" y2="302.3" stroke="#54ffff" stroke-width="1.1"/>
<rect x="1137.8" y="285" width="7.4" height="7.3" fill="#54ffff"/>
<line x1="1150.59" y1="285" x2="1150.59" y2="286.7" stroke="#f03030" stroke-width="1.1"/>
<line x1="1150.59" y1="292" x2="1150.59" y2="299.5" stroke="#f03030" stroke-width="1.1"/>
<rect x="1147.49" y="287.3" width="6.2" height="4.1" fill="none" stroke="#f03030" stroke-width="1.3"/>
<line x1="1159.68" y1="282" x2="1159.68" y2="293.4" stroke="#54ffff" stroke-width="1.1"/>
<rect x="1155.98" y="286.7" width="7.4" height="6.7" fill="#54ffff"/>
<line x1="1168.76" y1="286.5" x2="1168.76" y2="297.3" stroke="#d8d8d8" stroke-width="1.1"/>
<line x1="1165.06" y1="293.4" x2="1172.46" y2="293.4" stroke="#d8d8d8" stroke-width="1.2"/>
<line x1="1177.85" y1="279.5" x2="1177.85" y2="287.6" stroke="#f03030" stroke-width="1.1"/>
<line x1="1177.85" y1="292.3" x2="1177.85" y2="302.8" stroke="#f03030" stroke-width="1.1"/>
<rect x="1174.75" y="288.2" width="6.2" height="3.5" fill="none" stroke="#f03030" stroke-width="1.3"/>
<polyline points="5.5,394.9 14.59,391 23.68,387.81 32.76,385.11 41.85,382.42 50.94,379.73 60.03,377.04 69.12,374.34 78.2,372.19 87.29,370.07 96.38,367.95 105.47,365.83 114.56,363.71 123.64,361.59 132.73,359.37 141.82,357.05 150.91,354.73 160,352.41 169.08,350.1 178.17,347.78 187.26,345.46 196.35,343.14 205.44,340.88 214.52,338.69 223.61,336.51 232.7,334.32 241.79,331.98 250.88,329.39 259.96,326.8 269.05,324.22 278.14,321.63 287.23,319.4 296.32,317.25 305.4,315.11 314.49,312.5 323.58,309.69 332.67,306.88 341.76,304.08 350.84,301.85 359.93,300.1 369.02,298.36 378.11,296.61 387.2,294.52 396.28,291.81 405.37,289.1 414.46,286.39 423.55,283.76 432.64,281.49 441.72,279.22 450.81,276.95 459.9,274.68 468.99,273.06 478.08,271.43 487.16,270.95 496.25,272.5 505.34,274.32 514.43,276.14 523.52,278.75 532.6,281.62 541.69,283.41 550.78,284.86 559.87,285.72 568.96,285.59 578.04,285.57 587.13,285.11 596.22,284.66 605.31,282.42 614.4,279.31 623.48,275.96 632.57,274.14 641.66,272.62 650.75,271.26 659.84,269.87 668.92,268.67 678.01,267.28 687.1,265.37 696.19,263.53 705.28,262.02 714.36,260.64 723.45,258.83 732.54,257.36 741.63,255.76 750.72,253.95 759.8,251.98 768.89,250.16 777.98,248.28 787.07,246.45 796.16,245.3 805.24,244.49 814.33,243.46 823.42,242.34 832.51,240.94 841.6,239.8 850.68,238.33 859.77,237.29 868.86,236.05 877.95,235.12 887.04,234.27 896.12,232.91 905.21,230.59 914.3,228.78 923.39,227.15 932.48,225.92 941.56,224.52 950.65,223.27 959.74,222.53 968.83,222.24 977.92,221.84 987,221.51 996.09,221.43 1005.18,221.43 1014.27,221.84 1023.36,221.98 1032.44,221.84 1041.53,221.64 1050.62,221.6 1059.71,221.34 1068.8,220.7 1077.88,220.29 1086.97,220.15 1096.06,220.05 1105.15,220.31 1114.24,221.04 1123.32,221.7 1132.41,222.58 1141.5,223.48 1150.59,225.81 1159.68,228.86 1168.76,230.84 1177.85,232.25" fill="none" stroke="#00a800" stroke-width="1.0" stroke-linejoin="round"/>
<polyline points="5.5,303.3 14.59,295.5 23.68,286 32.76,279 41.85,271.5 50.94,266 60.03,260 69.12,254.5 78.2,252.8 87.29,249.5 96.38,245.5 105.47,241.8 114.56,240.6 123.64,240.6 132.73,244.8 141.82,249.3 150.91,257.8 160,266.3 169.08,276.8 178.17,287.29 187.26,294.08 196.35,300.79 205.44,305.7 214.52,310.93 223.61,315.25 232.7,318.56 241.79,319.72 250.88,319.27 259.96,314.81 269.05,313.94 278.14,313.56 287.23,313.32 296.32,312.63 305.4,313.37 314.49,312.18 323.58,310.55 332.67,307.97 341.76,304.91 350.84,302.49 359.93,300.82 369.02,299.34 378.11,296.76 387.2,292.94 396.28,288.46 405.37,283.64 414.46,278.67 423.55,275.07 432.64,272.22 441.72,269.75 450.81,266.88 459.9,265.37 468.99,263.06 478.08,261.27 487.16,259.51 496.25,258.93 505.34,258.26 514.43,258.88 523.52,261.61 532.6,262.79 541.69,262.11 550.78,261.16 559.87,259.61 568.96,258.13 578.04,257.31 587.13,256.45 596.22,256.76 605.31,252.46 614.4,246.46 623.48,243.32 632.57,241.62 641.66,238.93 650.75,237.38 659.84,235.72 668.92,233.14 678.01,230.73 687.1,227.31 696.19,223.73 705.28,219.54 714.36,216.65 723.45,213.55 732.54,211.58 741.63,210.89 750.72,210.78 759.8,210.16 768.89,210.39 777.98,209.41 787.07,211.81 796.16,217.23 805.24,220.39 814.33,221.89 823.42,222.73 832.51,222.38 841.6,222.43 850.68,222.35 859.77,222.22 868.86,222.58 877.95,222.76 887.04,221.65 896.12,219.29 905.21,216.11 914.3,213.59 923.39,210.96 932.48,208.83 941.56,206.08 950.65,202.97 959.74,201.42 968.83,202.44 977.92,201.84 987,200.8 996.09,200.78 1005.18,202.62 1014.27,205.76 1023.36,207.79 1032.44,210.03 1041.53,211.97 1050.62,214.92 1059.71,217.53 1068.8,220.92 1077.88,224.93 1086.97,230.78 1096.06,234.97 1105.15,239.07 1114.24,243.51 1123.32,248.87 1132.41,254.38 1141.5,259.61 1150.59,263.19 1159.68,267.52 1168.76,271.34 1177.85,274.06" fill="none" stroke="#a800b0" stroke-width="1.0" stroke-linejoin="round"/>
<polyline points="5.5,214.8 14.59,196.5 23.68,189 32.76,186.3 41.85,185.8 50.94,191.5 60.03,206.3 69.12,220.5 78.2,245 87.29,266.51 96.38,277.86 105.47,287.56 114.56,293.86 123.64,297.75 132.73,302.29 141.82,307.55 150.91,311.92 160,313.15 169.08,306.71 178.17,308.08 187.26,310.31 196.35,314.03 205.44,317.54 214.52,324.11 223.61,328.2 232.7,329.56 241.79,327.51 250.88,325.39 259.96,322.91 269.05,319.79 278.14,316.81 287.23,312.61 296.32,307.72 305.4,302.63 314.49,296.15 323.58,291.54 332.67,288.42 341.76,284.42 350.84,282.06 359.93,281.85 369.02,281.88 378.11,280.92 387.2,278.15 396.28,274.29 405.37,271.13 414.46,265.8 423.55,261.73 432.64,260.01 441.72,257.43 450.81,251.91 459.9,248.85 468.99,245.21 478.08,244.39 487.16,244.73 496.25,246.72 505.34,250.72 514.43,256.04 523.52,263.21 532.6,268.16 541.69,272.3 550.78,273.47 559.87,274.01 568.96,271.87 578.04,269.89 587.13,266.19 596.22,262.79 605.31,248.88 614.4,229.71 623.48,218.48 632.57,210.94 641.66,204.4 650.75,200.75 659.84,199.56 668.92,196.38 678.01,195.28 687.1,191.82 696.19,198.57 705.28,209.38 714.36,214.81 723.45,216.17 732.54,218.76 741.63,221.03 750.72,222 759.8,223.94 768.89,225.5 777.98,226.98 787.07,225.03 796.16,225.07 805.24,225.98 814.33,227.62 823.42,226.71 832.51,223.74 841.6,222.85 850.68,220.76 859.77,218.93 868.86,218.17 877.95,220.48 887.04,218.22 896.12,212.6 905.21,204.6 914.3,200.48 923.39,198.18 932.48,194.82 941.56,191.41 950.65,187 959.74,184.66 968.83,184.41 977.92,185.46 987,189 996.09,196.97 1005.18,204.76 1014.27,213.34 1023.36,220.76 1032.44,228.64 1041.53,236.95 1050.62,245.17 1059.71,250.65 1068.8,256.38 1077.88,260.85 1086.97,264.6 1096.06,265.17 1105.15,264.8 1114.24,266.25 1123.32,269.09 1132.41,271.8 1141.5,274.05 1150.59,275.74 1159.68,278.66 1168.76,281.83 1177.85,283.53" fill="none" stroke="#a8a800" stroke-width="1.0" stroke-linejoin="round"/>
<polyline points="5.5,141.2 14.59,150.5 23.68,167.5 32.76,196 41.85,226.78 50.94,244.06 60.03,259.9 69.12,270.74 78.2,295.48 87.29,306.24 96.38,311.66 105.47,315.22 114.56,316.98 123.64,300.02 132.73,298.34 141.82,303.44 150.91,308.62 160,309.32 169.08,313.4 178.17,317.82 187.26,317.18 196.35,319.44 205.44,325.76 214.52,334.82 223.61,338.58 232.7,341.94 241.79,335.58 250.88,325.02 259.96,311 269.05,301 278.14,291.68 287.23,289.64 296.32,290.42 305.4,294.26 314.49,291.3 323.58,291.4 332.67,287.2 341.76,278.42 350.84,269.86 359.93,272.4 369.02,272.36 378.11,274.64 387.2,277.88 396.28,278.72 405.37,269.86 414.46,259.24 423.55,248.82 432.64,242.14 441.72,236.14 450.81,233.96 459.9,238.46 468.99,241.6 478.08,246.64 487.16,253.32 496.25,259.48 505.34,262.98 514.43,270.48 523.52,279.78 532.6,283 541.69,285.12 550.78,283.96 559.87,277.54 568.96,263.96 578.04,256.78 587.13,247.25 596.22,241.63 605.31,220.23 614.4,195.45 623.48,180.19 632.57,174.62 641.66,167.16 650.75,181.28 659.84,203.68 668.92,212.58 678.01,215.94 687.1,216.49 696.19,215.87 705.28,215.09 714.36,217.04 723.45,216.4 732.54,221.03 741.63,226.19 750.72,228.91 759.8,230.84 768.89,234.6 777.98,232.94 787.07,223.88 796.16,221.24 805.24,221.12 814.33,220.64 823.42,220.48 832.51,223.6 841.6,224.46 850.68,220.4 859.77,217.22 868.86,215.86 877.95,217.36 887.04,211.98 896.12,204.8 905.21,191.98 914.3,185.1 923.39,179 932.48,177.66 941.56,178.02 950.65,182.02 959.74,184.22 968.83,189.82 977.92,193.26 987,199.98 996.09,211.92 1005.18,225.3 1014.27,236.86 1023.36,248.26 1032.44,257.3 1041.53,261.98 1050.62,265.04 1059.71,264.44 1068.8,264.5 1077.88,264.4 1086.97,267.22 1096.06,265.3 1105.15,265.16 1114.24,268 1123.32,273.78 1132.41,276.38 1141.5,282.8 1150.59,286.32 1159.68,289.32 1168.76,289.88 1177.85,290.68" fill="none" stroke="#b4b4b4" stroke-width="1.0" stroke-linejoin="round"/>
<path d="M614.4,98.5 H627.7 M619.1,95.1 L614.4,98.5 L619.1,101.8" fill="none" stroke="#c0c0c0" stroke-width="1"/>
<path d="M78,380.3 H91.6 M82.6,377 L78,380.3 L82.6,383.6" fill="none" stroke="#c0c0c0" stroke-width="1"/>
<polygon points="5.5,45.3 6.11,47.02 7.76,46.24 6.98,47.89 8.7,48.5 6.98,49.11 7.76,50.76 6.11,49.98 5.5,51.7 4.89,49.98 3.24,50.76 4.02,49.11 2.3,48.5 4.02,47.89 3.24,46.24 4.89,47.02" fill="#c8c8c8"/>
<polygon points="23.68,45.3 24.29,47.02 25.94,46.24 25.15,47.89 26.88,48.5 25.15,49.11 25.94,50.76 24.29,49.98 23.68,51.7 23.06,49.98 21.41,50.76 22.2,49.11 20.48,48.5 22.2,47.89 21.41,46.24 23.06,47.02" fill="#c8c8c8"/>
<polygon points="32.76,45.3 33.38,47.02 35.03,46.24 34.24,47.89 35.96,48.5 34.24,49.11 35.03,50.76 33.38,49.98 32.76,51.7 32.15,49.98 30.5,50.76 31.29,49.11 29.56,48.5 31.29,47.89 30.5,46.24 32.15,47.02" fill="#c8c8c8"/>
<polygon points="87.29,45.3 87.9,47.02 89.55,46.24 88.77,47.89 90.49,48.5 88.77,49.11 89.55,50.76 87.9,49.98 87.29,51.7 86.68,49.98 85.03,50.76 85.81,49.11 84.09,48.5 85.81,47.89 85.03,46.24 86.68,47.02" fill="#c8c8c8"/>
<polygon points="96.38,45.3 96.99,47.02 98.64,46.24 97.86,47.89 99.58,48.5 97.86,49.11 98.64,50.76 96.99,49.98 96.38,51.7 95.77,49.98 94.12,50.76 94.9,49.11 93.18,48.5 94.9,47.89 94.12,46.24 95.77,47.02" fill="#c8c8c8"/>
<polygon points="105.47,45.3 106.08,47.02 107.73,46.24 106.95,47.89 108.67,48.5 106.95,49.11 107.73,50.76 106.08,49.98 105.47,51.7 104.86,49.98 103.21,50.76 103.99,49.11 102.27,48.5 103.99,47.89 103.21,46.24 104.86,47.02" fill="#c8c8c8"/>
<polygon points="160,45.3 160.61,47.02 162.26,46.24 161.47,47.89 163.2,48.5 161.47,49.11 162.26,50.76 160.61,49.98 160,51.7 159.38,49.98 157.73,50.76 158.52,49.11 156.8,48.5 158.52,47.89 157.73,46.24 159.38,47.02" fill="#c8c8c8"/>
<polygon points="169.08,45.3 169.7,47.02 171.35,46.24 170.56,47.89 172.28,48.5 170.56,49.11 171.35,50.76 169.7,49.98 169.08,51.7 168.47,49.98 166.82,50.76 167.61,49.11 165.88,48.5 167.61,47.89 166.82,46.24 168.47,47.02" fill="#c8c8c8"/>
<polygon points="223.61,45.3 224.22,47.02 225.87,46.24 225.09,47.89 226.81,48.5 225.09,49.11 225.87,50.76 224.22,49.98 223.61,51.7 223,49.98 221.35,50.76 222.13,49.11 220.41,48.5 222.13,47.89 221.35,46.24 223,47.02" fill="#c8c8c8"/>
<polygon points="232.7,45.3 233.31,47.02 234.96,46.24 234.18,47.89 235.9,48.5 234.18,49.11 234.96,50.76 233.31,49.98 232.7,51.7 232.09,49.98 230.44,50.76 231.22,49.11 229.5,48.5 231.22,47.89 230.44,46.24 232.09,47.02" fill="#c8c8c8"/>
<polygon points="241.79,45.3 242.4,47.02 244.05,46.24 243.27,47.89 244.99,48.5 243.27,49.11 244.05,50.76 242.4,49.98 241.79,51.7 241.18,49.98 239.53,50.76 240.31,49.11 238.59,48.5 240.31,47.89 239.53,46.24 241.18,47.02" fill="#c8c8c8"/>
<polygon points="250.88,45.3 251.49,47.02 253.14,46.24 252.35,47.89 254.08,48.5 252.35,49.11 253.14,50.76 251.49,49.98 250.88,51.7 250.26,49.98 248.61,50.76 249.4,49.11 247.68,48.5 249.4,47.89 248.61,46.24 250.26,47.02" fill="#c8c8c8"/>
<polygon points="332.67,45.3 333.28,47.02 334.93,46.24 334.15,47.89 335.87,48.5 334.15,49.11 334.93,50.76 333.28,49.98 332.67,51.7 332.06,49.98 330.41,50.76 331.19,49.11 329.47,48.5 331.19,47.89 330.41,46.24 332.06,47.02" fill="#c8c8c8"/>
<polygon points="341.76,45.3 342.37,47.02 344.02,46.24 343.23,47.89 344.96,48.5 343.23,49.11 344.02,50.76 342.37,49.98 341.76,51.7 341.14,49.98 339.49,50.76 340.28,49.11 338.56,48.5 340.28,47.89 339.49,46.24 341.14,47.02" fill="#c8c8c8"/>
<polygon points="387.2,45.3 387.81,47.02 389.46,46.24 388.67,47.89 390.4,48.5 388.67,49.11 389.46,50.76 387.81,49.98 387.2,51.7 386.58,49.98 384.93,50.76 385.72,49.11 384,48.5 385.72,47.89 384.93,46.24 386.58,47.02" fill="#c8c8c8"/>
<polygon points="414.46,45.3 415.07,47.02 416.72,46.24 415.94,47.89 417.66,48.5 415.94,49.11 416.72,50.76 415.07,49.98 414.46,51.7 413.85,49.98 412.2,50.76 412.98,49.11 411.26,48.5 412.98,47.89 412.2,46.24 413.85,47.02" fill="#c8c8c8"/>
<polygon points="423.55,45.3 424.16,47.02 425.81,46.24 425.03,47.89 426.75,48.5 425.03,49.11 425.81,50.76 424.16,49.98 423.55,51.7 422.94,49.98 421.29,50.76 422.07,49.11 420.35,48.5 422.07,47.89 421.29,46.24 422.94,47.02" fill="#c8c8c8"/>
<polygon points="432.64,45.3 433.25,47.02 434.9,46.24 434.11,47.89 435.84,48.5 434.11,49.11 434.9,50.76 433.25,49.98 432.64,51.7 432.02,49.98 430.37,50.76 431.16,49.11 429.44,48.5 431.16,47.89 430.37,46.24 432.02,47.02" fill="#c8c8c8"/>
<polygon points="532.6,45.3 533.22,47.02 534.87,46.24 534.08,47.89 535.8,48.5 534.08,49.11 534.87,50.76 533.22,49.98 532.6,51.7 531.99,49.98 530.34,50.76 531.13,49.11 529.4,48.5 531.13,47.89 530.34,46.24 531.99,47.02" fill="#c8c8c8"/>
<polygon points="541.69,45.3 542.3,47.02 543.95,46.24 543.17,47.89 544.89,48.5 543.17,49.11 543.95,50.76 542.3,49.98 541.69,51.7 541.08,49.98 539.43,50.76 540.21,49.11 538.49,48.5 540.21,47.89 539.43,46.24 541.08,47.02" fill="#c8c8c8"/>
<polygon points="559.87,45.3 560.48,47.02 562.13,46.24 561.35,47.89 563.07,48.5 561.35,49.11 562.13,50.76 560.48,49.98 559.87,51.7 559.26,49.98 557.61,50.76 558.39,49.11 556.67,48.5 558.39,47.89 557.61,46.24 559.26,47.02" fill="#c8c8c8"/>
<polygon points="568.96,45.3 569.57,47.02 571.22,46.24 570.43,47.89 572.16,48.5 570.43,49.11 571.22,50.76 569.57,49.98 568.96,51.7 568.34,49.98 566.69,50.76 567.48,49.11 565.76,48.5 567.48,47.89 566.69,46.24 568.34,47.02" fill="#c8c8c8"/>
<polygon points="605.31,45.3 605.92,47.02 607.57,46.24 606.79,47.89 608.51,48.5 606.79,49.11 607.57,50.76 605.92,49.98 605.31,51.7 604.7,49.98 603.05,50.76 603.83,49.11 602.11,48.5 603.83,47.89 603.05,46.24 604.7,47.02" fill="#c8c8c8"/>
<polygon points="614.4,45.3 615.01,47.02 616.66,46.24 615.87,47.89 617.6,48.5 615.87,49.11 616.66,50.76 615.01,49.98 614.4,51.7 613.78,49.98 612.13,50.76 612.92,49.11 611.2,48.5 612.92,47.89 612.13,46.24 613.78,47.02" fill="#c8c8c8"/>
<polygon points="623.48,45.3 624.1,47.02 625.75,46.24 624.96,47.89 626.68,48.5 624.96,49.11 625.75,50.76 624.1,49.98 623.48,51.7 622.87,49.98 621.22,50.76 622.01,49.11 620.28,48.5 622.01,47.89 621.22,46.24 622.87,47.02" fill="#c8c8c8"/>
<polygon points="832.51,45.3 833.12,47.02 834.77,46.24 833.99,47.89 835.71,48.5 833.99,49.11 834.77,50.76 833.12,49.98 832.51,51.7 831.9,49.98 830.25,50.76 831.03,49.11 829.31,48.5 831.03,47.89 830.25,46.24 831.9,47.02" fill="#c8c8c8"/>
<polygon points="850.68,45.3 851.3,47.02 852.95,46.24 852.16,47.89 853.88,48.5 852.16,49.11 852.95,50.76 851.3,49.98 850.68,51.7 850.07,49.98 848.42,50.76 849.21,49.11 847.48,48.5 849.21,47.89 848.42,46.24 850.07,47.02" fill="#c8c8c8"/>
<polygon points="887.04,45.3 887.65,47.02 889.3,46.24 888.51,47.89 890.24,48.5 888.51,49.11 889.3,50.76 887.65,49.98 887.04,51.7 886.42,49.98 884.77,50.76 885.56,49.11 883.84,48.5 885.56,47.89 884.77,46.24 886.42,47.02" fill="#c8c8c8"/>
<polygon points="896.12,45.3 896.74,47.02 898.39,46.24 897.6,47.89 899.32,48.5 897.6,49.11 898.39,50.76 896.74,49.98 896.12,51.7 895.51,49.98 893.86,50.76 894.65,49.11 892.92,48.5 894.65,47.89 893.86,46.24 895.51,47.02" fill="#c8c8c8"/>
<polygon points="987,45.3 987.62,47.02 989.27,46.24 988.48,47.89 990.2,48.5 988.48,49.11 989.27,50.76 987.62,49.98 987,51.7 986.39,49.98 984.74,50.76 985.53,49.11 983.8,48.5 985.53,47.89 984.74,46.24 986.39,47.02" fill="#c8c8c8"/>
<polygon points="1059.71,45.3 1060.32,47.02 1061.97,46.24 1061.19,47.89 1062.91,48.5 1061.19,49.11 1061.97,50.76 1060.32,49.98 1059.71,51.7 1059.1,49.98 1057.45,50.76 1058.23,49.11 1056.51,48.5 1058.23,47.89 1057.45,46.24 1059.1,47.02" fill="#c8c8c8"/>
<polygon points="1086.97,45.3 1087.58,47.02 1089.23,46.24 1088.45,47.89 1090.17,48.5 1088.45,49.11 1089.23,50.76 1087.58,49.98 1086.97,51.7 1086.36,49.98 1084.71,50.76 1085.49,49.11 1083.77,48.5 1085.49,47.89 1084.71,46.24 1086.36,47.02" fill="#c8c8c8"/>
<rect x="1.8" y="528.1" width="7.4" height="31.1" fill="#54ffff"/>
<rect x="10.89" y="530.2" width="7.4" height="29" fill="#54ffff"/>
<rect x="19.98" y="530.2" width="7.4" height="29" fill="#54ffff"/>
<rect x="29.06" y="541.4" width="7.4" height="17.8" fill="#54ffff"/>
<rect x="38.15" y="544" width="7.4" height="15.2" fill="#54ffff"/>
<rect x="47.24" y="544" width="7.4" height="15.2" fill="#54ffff"/>
<rect x="56.33" y="545" width="7.4" height="14.2" fill="#54ffff"/>
<rect x="65.42" y="548" width="7.4" height="11.2" fill="#54ffff"/>
<rect x="74.5" y="544.2" width="7.4" height="15" fill="#54ffff"/>
<rect x="84.19" y="544.1" width="6.2" height="14.5" fill="none" stroke="#f03030" stroke-width="1.2"/>
<rect x="93.28" y="527" width="6.2" height="31.6" fill="none" stroke="#f03030" stroke-width="1.2"/>
<rect x="101.77" y="532.5" width="7.4" height="26.7" fill="#54ffff"/>
<rect x="110.86" y="544" width="7.4" height="15.2" fill="#54ffff"/>
<rect x="120.54" y="542.8" width="6.2" height="15.8" fill="none" stroke="#f03030" stroke-width="1.2"/>
<rect x="129.03" y="546.1" width="7.4" height="13.1" fill="#54ffff"/>
<rect x="138.12" y="549" width="7.4" height="10.2" fill="#54ffff"/>
<rect x="147.21" y="550.3" width="7.4" height="8.9" fill="#54ffff"/>
<rect x="156.9" y="539.7" width="6.2" height="18.9" fill="none" stroke="#f03030" stroke-width="1.2"/>
<rect x="165.98" y="545.2" width="6.2" height="13.4" fill="none" stroke="#f03030" stroke-width="1.2"/>
<rect x="174.47" y="548.2" width="7.4" height="11" fill="#54ffff"/>
<rect x="184.16" y="545.7" width="6.2" height="12.9" fill="none" stroke="#f03030" stroke-width="1.2"/>
<rect x="192.65" y="547.9" width="7.4" height="11.3" fill="#54ffff"/>
<rect x="201.74" y="550.3" width="7.4" height="8.9" fill="#54ffff"/>
<rect x="210.82" y="550.6" width="7.4" height="8.6" fill="#54ffff"/>
<rect x="220.51" y="550.2" width="6.2" height="8.4" fill="none" stroke="#f03030" stroke-width="1.2"/>
<rect x="229.6" y="547.5" width="6.2" height="11.1" fill="none" stroke="#f03030" stroke-width="1.2"/>
<rect x="238.69" y="544.3" width="6.2" height="14.3" fill="none" stroke="#f03030" stroke-width="1.2"/>
<rect x="247.78" y="536.8" width="6.2" height="21.8" fill="none" stroke="#f03030" stroke-width="1.2"/>
<rect x="256.86" y="542.9" width="6.2" height="15.7" fill="none" stroke="#f03030" stroke-width="1.2"/>
<rect x="265.35" y="548.2" width="7.4" height="11" fill="#54ffff"/>
<rect x="275.04" y="546.7" width="6.2" height="11.9" fill="none" stroke="#f03030" stroke-width="1.2"/>
<rect x="283.53" y="544.8" width="7.4" height="14.4" fill="#54ffff"/>
<rect x="292.62" y="549" width="7.4" height="10.2" fill="#54ffff"/>
<rect x="301.7" y="550.3" width="7.4" height="8.9" fill="#54ffff"/>
<rect x="311.39" y="538.9" width="6.2" height="19.7" fill="none" stroke="#f03030" stroke-width="1.2"/>
<rect x="319.88" y="548.2" width="7.4" height="11" fill="#54ffff"/>
<rect x="329.57" y="544.9" width="6.2" height="13.7" fill="none" stroke="#f03030" stroke-width="1.2"/>
<rect x="338.66" y="535.9" width="6.2" height="22.7" fill="none" stroke="#f03030" stroke-width="1.2"/>
<rect x="347.14" y="542.3" width="7.4" height="16.9" fill="#54ffff"/>
<rect x="356.23" y="546.1" width="7.4" height="13.1" fill="#54ffff"/>
<rect x="365.92" y="552.5" width="6.2" height="6.1" fill="none" stroke="#f03030" stroke-width="1.2"/>
<rect x="375.01" y="552" width="6.2" height="6.6" fill="none" stroke="#f03030" stroke-width="1.2"/>
<rect x="384.1" y="537.8" width="6.2" height="20.8" fill="none" stroke="#f03030" stroke-width="1.2"/>
<rect x="392.58" y="543.7" width="7.4" height="15.5" fill="#54ffff"/>
<rect x="402.27" y="538" width="6.2" height="20.6" fill="none" stroke="#f03030" stroke-width="1.2"/>
<rect x="411.36" y="538.9" width="6.2" height="19.7" fill="none" stroke="#f03030" stroke-width="1.2"/>
<rect x="420.45" y="535.2" width="6.2" height="23.4" fill="none" stroke="#f03030" stroke-width="1.2"/>
<rect x="429.54" y="539.1" width="6.2" height="19.5" fill="none" stroke="#f03030" stroke-width="1.2"/>
<rect x="438.62" y="543.1" width="6.2" height="15.5" fill="none" stroke="#f03030" stroke-width="1.2"/>
<rect x="447.11" y="542.3" width="7.4" height="16.9" fill="#54ffff"/>
<rect x="456.2" y="543.7" width="7.4" height="15.5" fill="#54ffff"/>
<rect x="465.89" y="547.7" width="6.2" height="10.9" fill="none" stroke="#f03030" stroke-width="1.2"/>
<rect x="474.38" y="549.7" width="7.4" height="9.5" fill="#54ffff"/>
<rect x="483.46" y="546.8" width="7.4" height="12.4" fill="#54ffff"/>
<rect x="493.15" y="550.9" width="6.2" height="7.7" fill="none" stroke="#f03030" stroke-width="1.2"/>
<rect x="501.64" y="551.3" width="7.4" height="7.9" fill="#54ffff"/>
<rect x="510.73" y="549.7" width="7.4" height="9.5" fill="#54ffff"/>
<rect x="519.82" y="550.5" width="7.4" height="8.7" fill="#54ffff"/>
<rect x="529.5" y="549.5" width="6.2" height="9.1" fill="none" stroke="#f03030" stroke-width="1.2"/>
<rect x="538.59" y="550.3" width="6.2" height="8.3" fill="none" stroke="#f03030" stroke-width="1.2"/>
<rect x="547.68" y="547.7" width="6.2" height="10.9" fill="none" stroke="#f03030" stroke-width="1.2"/>
<rect x="556.77" y="545.3" width="6.2" height="13.3" fill="none" stroke="#f03030" stroke-width="1.2"/>
<rect x="565.86" y="533.8" width="6.2" height="24.8" fill="none" stroke="#f03030" stroke-width="1.2"/>
<rect x="574.34" y="540.2" width="7.4" height="19" fill="#54ffff"/>
<rect x="584.03" y="546.4" width="6.2" height="12.2" fill="none" stroke="#f03030" stroke-width="1.2"/>
<rect x="592.52" y="544.7" width="7.4" height="14.5" fill="#54ffff"/>
<rect x="602.21" y="540.9" width="6.2" height="17.7" fill="none" stroke="#f03030" stroke-width="1.2"/>
<rect x="611.3" y="506.1" width="6.2" height="52.5" fill="none" stroke="#f03030" stroke-width="1.2"/>
<rect x="619.78" y="525.2" width="7.4" height="34" fill="#54ffff"/>
<rect x="628.87" y="533.5" width="7.4" height="25.7" fill="#54ffff"/>
<rect x="638.56" y="539.1" width="6.2" height="19.5" fill="none" stroke="#f03030" stroke-width="1.2"/>
<rect x="647.05" y="540.2" width="7.4" height="19" fill="#54ffff"/>
<rect x="656.14" y="546.8" width="7.4" height="12.4" fill="#54ffff"/>
<rect x="665.82" y="549.8" width="6.2" height="8.8" fill="none" stroke="#f03030" stroke-width="1.2"/>
<rect x="674.91" y="551.9" width="6.2" height="6.7" fill="none" stroke="#f03030" stroke-width="1.2"/>
<rect x="684" y="539.8" width="6.2" height="18.8" fill="none" stroke="#f03030" stroke-width="1.2"/>
<rect x="692.49" y="546.3" width="7.4" height="12.9" fill="#54ffff"/>
<rect x="701.58" y="549.7" width="7.4" height="9.5" fill="#54ffff"/>
<rect x="710.66" y="549.7" width="7.4" height="9.5" fill="#54ffff"/>
<rect x="720.35" y="549.8" width="6.2" height="8.8" fill="none" stroke="#f03030" stroke-width="1.2"/>
<rect x="728.84" y="549.2" width="7.4" height="10" fill="#54ffff"/>
<rect x="737.93" y="550.3" width="7.4" height="8.9" fill="#54ffff"/>
<rect x="747.62" y="553.2" width="6.2" height="5.4" fill="none" stroke="#f03030" stroke-width="1.2"/>
<rect x="756.1" y="552.6" width="7.4" height="6.6" fill="#54ffff"/>
<rect x="765.79" y="555.8" width="6.2" height="2.8" fill="none" stroke="#f03030" stroke-width="1.2"/>
<rect x="774.88" y="542.9" width="6.2" height="15.7" fill="none" stroke="#f03030" stroke-width="1.2"/>
<rect x="783.97" y="532.8" width="6.2" height="25.8" fill="none" stroke="#f03030" stroke-width="1.2"/>
<rect x="792.46" y="543.4" width="7.4" height="15.8" fill="#54ffff"/>
<rect x="801.54" y="549.2" width="7.4" height="10" fill="#54ffff"/>
<rect x="811.23" y="553.4" width="6.2" height="5.2" fill="none" stroke="#f03030" stroke-width="1.2"/>
<rect x="820.32" y="549" width="6.2" height="9.6" fill="none" stroke="#f03030" stroke-width="1.2"/>
<rect x="829.41" y="544.8" width="6.2" height="13.8" fill="none" stroke="#f03030" stroke-width="1.2"/>
<rect x="837.9" y="548.9" width="7.4" height="10.3" fill="#54ffff"/>
<rect x="847.58" y="550.9" width="6.2" height="7.7" fill="none" stroke="#f03030" stroke-width="1.2"/>
<rect x="856.67" y="551.1" width="6.2" height="7.5" fill="none" stroke="#f03030" stroke-width="1.2"/>
<rect x="865.76" y="549.2" width="6.2" height="9.4" fill="none" stroke="#f03030" stroke-width="1.2"/>
<rect x="874.25" y="550" width="7.4" height="9.2" fill="#54ffff"/>
<rect x="883.94" y="535.9" width="6.2" height="22.7" fill="none" stroke="#f03030" stroke-width="1.2"/>
<rect x="893.02" y="536.4" width="6.2" height="22.2" fill="none" stroke="#f03030" stroke-width="1.2"/>
<rect x="902.11" y="532.8" width="6.2" height="25.8" fill="none" stroke="#f03030" stroke-width="1.2"/>
<rect x="910.6" y="539.2" width="7.4" height="20" fill="#54ffff"/>
<rect x="919.69" y="546.8" width="7.4" height="12.4" fill="#54ffff"/>
<rect x="928.78" y="547.9" width="7.4" height="11.3" fill="#54ffff"/>
<rect x="938.46" y="550.1" width="6.2" height="8.5" fill="none" stroke="#f03030" stroke-width="1.2"/>
<rect x="947.55" y="546.4" width="6.2" height="12.2" fill="none" stroke="#f03030" stroke-width="1.2"/>
<rect x="956.04" y="550" width="7.4" height="9.2" fill="#54ffff"/>
<rect x="965.13" y="547.4" width="7.4" height="11.8" fill="#54ffff"/>
<rect x="974.82" y="551.1" width="6.2" height="7.5" fill="none" stroke="#f03030" stroke-width="1.2"/>
<rect x="983.9" y="551.1" width="6.2" height="7.5" fill="none" stroke="#f03030" stroke-width="1.2"/>
<rect x="992.39" y="549.5" width="7.4" height="9.7" fill="#54ffff"/>
<rect x="1001.48" y="552.1" width="7.4" height="7.1" fill="#54ffff"/>
<rect x="1010.57" y="552.8" width="7.4" height="6.4" fill="#54ffff"/>
<rect x="1020.26" y="553" width="6.2" height="5.6" fill="none" stroke="#f03030" stroke-width="1.2"/>
<rect x="1029.34" y="553.7" width="6.2" height="4.9" fill="none" stroke="#f03030" stroke-width="1.2"/>
<rect x="1038.43" y="555.6" width="6.2" height="3" fill="none" stroke="#f03030" stroke-width="1.2"/>
<rect x="1046.92" y="555.2" width="7.4" height="4" fill="#54ffff"/>
<rect x="1056.01" y="556" width="7.4" height="3.2" fill="#54ffff"/>
<rect x="1065.7" y="556" width="6.2" height="2.6" fill="none" stroke="#f03030" stroke-width="1.2"/>
<rect x="1074.78" y="556" width="6.2" height="2.6" fill="none" stroke="#f03030" stroke-width="1.2"/>
<rect x="1083.27" y="555.6" width="7.4" height="3.6" fill="#54ffff"/>
<rect x="1092.96" y="556" width="6.2" height="2.6" fill="none" stroke="#f03030" stroke-width="1.2"/>
<rect x="1101.45" y="555.4" width="7.4" height="3.8" fill="#54ffff"/>
<rect x="1110.54" y="555.4" width="7.4" height="3.8" fill="#54ffff"/>
<rect x="1119.62" y="555.4" width="7.4" height="3.8" fill="#54ffff"/>
<rect x="1129.31" y="556" width="6.2" height="2.6" fill="none" stroke="#f03030" stroke-width="1.2"/>
<rect x="1137.8" y="554.6" width="7.4" height="4.6" fill="#54ffff"/>
<rect x="1147.49" y="556.4" width="6.2" height="2.2" fill="none" stroke="#f03030" stroke-width="1.2"/>
<rect x="1155.98" y="555.4" width="7.4" height="3.8" fill="#54ffff"/>
<rect x="1165.66" y="556" width="6.2" height="2.6" fill="none" stroke="#f03030" stroke-width="1.2"/>
<rect x="1174.75" y="556" width="6.2" height="2.6" fill="none" stroke="#f03030" stroke-width="1.2"/>
<polyline points="5.5,520.4 14.59,519.4 23.68,519.4 32.76,522.5 41.85,525.9 50.94,529.3 60.03,532.8 69.12,535.6 78.2,538.4 87.29,539.86 96.38,539.69 105.47,539.92 114.56,541.3 123.64,541.38 132.73,541.59 141.82,542.09 150.91,542.62 160,541.73 169.08,541.77 178.17,542.24 187.26,544.11 196.35,545.65 205.44,546.28 214.52,547.12 223.61,547.47 232.7,547.26 241.79,546.6 250.88,546.31 259.96,546.08 269.05,546.08 278.14,546.18 287.23,545.87 296.32,545.74 305.4,545.71 314.49,544.58 323.58,544.71 332.67,544.77 341.76,544.68 350.84,544.68 359.93,544.47 369.02,545.05 378.11,545.71 387.2,544.53 396.28,543.87 405.37,543.78 414.46,542.79 423.55,541.82 432.64,542.14 441.72,542.16 450.81,541.78 459.9,540.96 468.99,540.53 478.08,541.78 487.16,542.09 496.25,543.38 505.34,544.68 514.43,546.19 523.52,547.39 532.6,548.03 541.69,548.77 550.78,549.11 559.87,548.87 568.96,547.22 578.04,546.56 587.13,546.11 596.22,545.45 605.31,544.51 614.4,540.01 623.48,537.64 632.57,536.02 641.66,535.16 650.75,534.71 659.84,536.07 668.92,536.97 678.01,537.52 687.1,536.97 696.19,537.57 705.28,541.99 714.36,544.44 723.45,546.01 732.54,547.08 741.63,548.09 750.72,548.67 759.8,549.01 768.89,549.4 777.98,549.71 787.07,548.3 796.16,547.67 805.24,547.62 814.33,547.98 823.42,547.9 832.51,547.29 841.6,546.92 850.68,546.69 859.77,546.22 868.86,546.85 877.95,548.63 887.04,547.82 896.12,546.48 905.21,544.42 914.3,543.5 923.39,543.76 932.48,543.66 941.56,543.58 950.65,543.11 959.74,543.25 968.83,542.99 977.92,544.51 987,545.98 996.09,547.71 1005.18,549 1014.27,549.6 1023.36,550.05 1032.44,550.41 1041.53,551.33 1050.62,551.85 1059.71,552.71 1068.8,553.2 1077.88,553.69 1086.97,554.3 1096.06,554.63 1105.15,554.89 1114.24,555.19 1123.32,555.42 1132.41,555.46 1141.5,555.4 1150.59,555.38 1159.68,555.38 1168.76,555.38 1177.85,555.36" fill="none" stroke="#a800b0" stroke-width="1.0" stroke-linejoin="round"/>
<polyline points="5.5,518.6 14.59,521.5 23.68,525.5 32.76,531 41.85,534.78 50.94,537.96 60.03,540.92 69.12,544.48 78.2,545.04 87.29,544.94 96.38,541.42 105.47,538.92 114.56,538.12 123.64,537.72 132.73,538.24 141.82,542.76 150.91,546.32 160,545.34 169.08,545.82 178.17,546.24 187.26,545.46 196.35,544.98 205.44,547.22 214.52,548.42 223.61,548.7 232.7,549.06 241.79,548.22 250.88,545.4 259.96,543.74 269.05,543.46 278.14,543.3 287.23,543.52 296.32,546.08 305.4,547.68 314.49,545.7 323.58,546.12 332.67,546.02 341.76,543.28 350.84,541.68 359.93,543.24 369.02,543.98 378.11,545.4 387.2,545.78 396.28,546.06 405.37,544.32 414.46,541.6 423.55,538.24 432.64,538.5 441.72,538.26 450.81,539.24 459.9,540.32 468.99,542.82 478.08,545.06 487.16,545.92 496.25,547.52 505.34,549.04 514.43,549.56 523.52,549.72 532.6,550.14 541.69,550.02 550.78,549.18 559.87,548.18 568.96,544.72 578.04,542.98 587.13,542.2 596.22,541.72 605.31,540.84 614.4,535.3 623.48,532.3 632.57,529.84 641.66,528.6 650.75,528.58 659.84,536.84 668.92,541.64 678.01,545.2 687.1,545.34 696.19,546.56 705.28,547.14 714.36,547.24 723.45,546.82 732.54,548.82 741.63,549.62 750.72,550.2 759.8,550.78 768.89,551.98 777.98,550.6 787.07,546.98 796.16,545.14 805.24,544.46 814.33,543.98 823.42,545.2 832.51,547.6 841.6,548.7 850.68,548.92 859.77,548.46 868.86,548.5 877.95,549.66 887.04,546.94 896.12,544.04 905.21,540.38 914.3,538.5 923.39,537.86 932.48,540.38 941.56,543.12 950.65,545.84 959.74,548 968.83,548.12 977.92,548.64 987,548.84 996.09,549.58 1005.18,550 1014.27,551.08 1023.36,551.46 1032.44,551.98 1041.53,553.08 1050.62,553.7 1059.71,554.34 1068.8,554.94 1077.88,555.4 1086.97,555.52 1096.06,555.56 1105.15,555.44 1114.24,555.44 1123.32,555.44 1132.41,555.4 1141.5,555.24 1150.59,555.32 1159.68,555.32 1168.76,555.32 1177.85,555.32" fill="none" stroke="#a8a800" stroke-width="1.0" stroke-linejoin="round"/>
<line x1="5.5" y1="674.9" x2="5.5" y2="656.9" stroke="#d03030" stroke-width="1.1"/>
<line x1="14.59" y1="674.9" x2="14.59" y2="663.18" stroke="#d03030" stroke-width="1.1"/>
<line x1="23.68" y1="674.9" x2="23.68" y2="670.52" stroke="#d03030" stroke-width="1.1"/>
<line x1="32.76" y1="674.9" x2="32.76" y2="676.37" stroke="#3cb4b4" stroke-width="1.1"/>
<line x1="41.85" y1="674.9" x2="41.85" y2="680.8" stroke="#3cb4b4" stroke-width="1.1"/>
<line x1="50.94" y1="674.9" x2="50.94" y2="684.12" stroke="#3cb4b4" stroke-width="1.1"/>
<line x1="60.03" y1="674.9" x2="60.03" y2="687.05" stroke="#3cb4b4" stroke-width="1.1"/>
<line x1="69.12" y1="674.9" x2="69.12" y2="689.56" stroke="#3cb4b4" stroke-width="1.1"/>
<line x1="78.2" y1="674.9" x2="78.2" y2="695.24" stroke="#3cb4b4" stroke-width="1.1"/>
<line x1="87.29" y1="674.9" x2="87.29" y2="694.46" stroke="#3cb4b4" stroke-width="1.1"/>
<line x1="96.38" y1="674.9" x2="96.38" y2="692.11" stroke="#3cb4b4" stroke-width="1.1"/>
<line x1="105.47" y1="674.9" x2="105.47" y2="690.34" stroke="#3cb4b4" stroke-width="1.1"/>
<line x1="114.56" y1="674.9" x2="114.56" y2="689.02" stroke="#3cb4b4" stroke-width="1.1"/>
<line x1="123.64" y1="674.9" x2="123.64" y2="686.81" stroke="#3cb4b4" stroke-width="1.1"/>
<line x1="132.73" y1="674.9" x2="132.73" y2="685.69" stroke="#3cb4b4" stroke-width="1.1"/>
<line x1="141.82" y1="674.9" x2="141.82" y2="685.35" stroke="#3cb4b4" stroke-width="1.1"/>
<line x1="150.91" y1="674.9" x2="150.91" y2="685.09" stroke="#3cb4b4" stroke-width="1.1"/>
<line x1="160" y1="674.9" x2="160" y2="683.57" stroke="#3cb4b4" stroke-width="1.1"/>
<line x1="169.08" y1="674.9" x2="169.08" y2="682.37" stroke="#3cb4b4" stroke-width="1.1"/>
<line x1="178.17" y1="674.9" x2="178.17" y2="682.11" stroke="#3cb4b4" stroke-width="1.1"/>
<line x1="187.26" y1="674.9" x2="187.26" y2="680.96" stroke="#3cb4b4" stroke-width="1.1"/>
<line x1="196.35" y1="674.9" x2="196.35" y2="681.14" stroke="#3cb4b4" stroke-width="1.1"/>
<line x1="205.44" y1="674.9" x2="205.44" y2="681.19" stroke="#3cb4b4" stroke-width="1.1"/>
<line x1="214.52" y1="674.9" x2="214.52" y2="681.8" stroke="#3cb4b4" stroke-width="1.1"/>
<line x1="223.61" y1="674.9" x2="223.61" y2="681.12" stroke="#3cb4b4" stroke-width="1.1"/>
<line x1="232.7" y1="674.9" x2="232.7" y2="679.57" stroke="#3cb4b4" stroke-width="1.1"/>
<line x1="241.79" y1="674.9" x2="241.79" y2="676.74" stroke="#3cb4b4" stroke-width="1.1"/>
<line x1="250.88" y1="674.9" x2="250.88" y2="673.89" stroke="#d03030" stroke-width="1.1"/>
<line x1="259.96" y1="674.9" x2="259.96" y2="672.03" stroke="#d03030" stroke-width="1.1"/>
<line x1="269.05" y1="674.9" x2="269.05" y2="671.43" stroke="#d03030" stroke-width="1.1"/>
<line x1="278.14" y1="674.9" x2="278.14" y2="670.64" stroke="#d03030" stroke-width="1.1"/>
<line x1="287.23" y1="674.9" x2="287.23" y2="670.86" stroke="#d03030" stroke-width="1.1"/>
<line x1="296.32" y1="674.9" x2="296.32" y2="671.05" stroke="#d03030" stroke-width="1.1"/>
<line x1="305.4" y1="674.9" x2="305.4" y2="672.16" stroke="#d03030" stroke-width="1.1"/>
<line x1="314.49" y1="674.9" x2="314.49" y2="671.53" stroke="#d03030" stroke-width="1.1"/>
<line x1="323.58" y1="674.9" x2="323.58" y2="671.63" stroke="#d03030" stroke-width="1.1"/>
<line x1="332.67" y1="674.9" x2="332.67" y2="671.16" stroke="#d03030" stroke-width="1.1"/>
<line x1="341.76" y1="674.9" x2="341.76" y2="669.64" stroke="#d03030" stroke-width="1.1"/>
<line x1="350.84" y1="674.9" x2="350.84" y2="669.86" stroke="#d03030" stroke-width="1.1"/>
<line x1="359.93" y1="674.9" x2="359.93" y2="672" stroke="#d03030" stroke-width="1.1"/>
<line x1="369.02" y1="674.9" x2="369.02" y2="673.12" stroke="#d03030" stroke-width="1.1"/>
<line x1="378.11" y1="674.9" x2="378.11" y2="673.91" stroke="#d03030" stroke-width="1.1"/>
<line x1="387.2" y1="674.9" x2="387.2" y2="673.36" stroke="#d03030" stroke-width="1.1"/>
<line x1="396.28" y1="674.9" x2="396.28" y2="673.33" stroke="#d03030" stroke-width="1.1"/>
<line x1="405.37" y1="674.9" x2="405.37" y2="672.39" stroke="#d03030" stroke-width="1.1"/>
<line x1="414.46" y1="674.9" x2="414.46" y2="671.07" stroke="#d03030" stroke-width="1.1"/>
<line x1="423.55" y1="674.9" x2="423.55" y2="670.53" stroke="#d03030" stroke-width="1.1"/>
<line x1="432.64" y1="674.9" x2="432.64" y2="670.41" stroke="#d03030" stroke-width="1.1"/>
<line x1="441.72" y1="674.9" x2="441.72" y2="671.04" stroke="#d03030" stroke-width="1.1"/>
<line x1="450.81" y1="674.9" x2="450.81" y2="671.76" stroke="#d03030" stroke-width="1.1"/>
<line x1="459.9" y1="674.9" x2="459.9" y2="673.47" stroke="#d03030" stroke-width="1.1"/>
<line x1="468.99" y1="674.9" x2="468.99" y2="674.35" stroke="#d03030" stroke-width="1.1"/>
<line x1="478.08" y1="674.9" x2="478.08" y2="675.49" stroke="#3cb4b4" stroke-width="1.1"/>
<line x1="487.16" y1="674.9" x2="487.16" y2="677.13" stroke="#3cb4b4" stroke-width="1.1"/>
<line x1="496.25" y1="674.9" x2="496.25" y2="678.02" stroke="#3cb4b4" stroke-width="1.1"/>
<line x1="505.34" y1="674.9" x2="505.34" y2="678.74" stroke="#3cb4b4" stroke-width="1.1"/>
<line x1="514.43" y1="674.9" x2="514.43" y2="679.84" stroke="#3cb4b4" stroke-width="1.1"/>
<line x1="523.52" y1="674.9" x2="523.52" y2="681.31" stroke="#3cb4b4" stroke-width="1.1"/>
<line x1="532.6" y1="674.9" x2="532.6" y2="681.08" stroke="#3cb4b4" stroke-width="1.1"/>
<line x1="541.69" y1="674.9" x2="541.69" y2="680.22" stroke="#3cb4b4" stroke-width="1.1"/>
<line x1="550.78" y1="674.9" x2="550.78" y2="678.73" stroke="#3cb4b4" stroke-width="1.1"/>
<line x1="559.87" y1="674.9" x2="559.87" y2="676.9" stroke="#3cb4b4" stroke-width="1.1"/>
<line x1="568.96" y1="674.9" x2="568.96" y2="674.59" stroke="#d03030" stroke-width="1.1"/>
<line x1="578.04" y1="674.9" x2="578.04" y2="674.12" stroke="#d03030" stroke-width="1.1"/>
<line x1="587.13" y1="674.9" x2="587.13" y2="672.79" stroke="#d03030" stroke-width="1.1"/>
<line x1="596.22" y1="674.9" x2="596.22" y2="672.5" stroke="#d03030" stroke-width="1.1"/>
<line x1="605.31" y1="674.9" x2="605.31" y2="667.26" stroke="#d03030" stroke-width="1.1"/>
<line x1="614.4" y1="674.9" x2="614.4" y2="662.39" stroke="#d03030" stroke-width="1.1"/>
<line x1="623.48" y1="674.9" x2="623.48" y2="663.72" stroke="#d03030" stroke-width="1.1"/>
<line x1="632.57" y1="674.9" x2="632.57" y2="666.9" stroke="#d03030" stroke-width="1.1"/>
<line x1="641.66" y1="674.9" x2="641.66" y2="669.31" stroke="#d03030" stroke-width="1.1"/>
<line x1="650.75" y1="674.9" x2="650.75" y2="672.17" stroke="#d03030" stroke-width="1.1"/>
<line x1="659.84" y1="674.9" x2="659.84" y2="674.56" stroke="#d03030" stroke-width="1.1"/>
<line x1="668.92" y1="674.9" x2="668.92" y2="676.04" stroke="#3cb4b4" stroke-width="1.1"/>
<line x1="678.01" y1="674.9" x2="678.01" y2="677.12" stroke="#3cb4b4" stroke-width="1.1"/>
<line x1="687.1" y1="674.9" x2="687.1" y2="676.89" stroke="#3cb4b4" stroke-width="1.1"/>
<line x1="696.19" y1="674.9" x2="696.19" y2="677.35" stroke="#3cb4b4" stroke-width="1.1"/>
<line x1="705.28" y1="674.9" x2="705.28" y2="677.92" stroke="#3cb4b4" stroke-width="1.1"/>
<line x1="714.36" y1="674.9" x2="714.36" y2="678.82" stroke="#3cb4b4" stroke-width="1.1"/>
<line x1="723.45" y1="674.9" x2="723.45" y2="678.63" stroke="#3cb4b4" stroke-width="1.1"/>
<line x1="732.54" y1="674.9" x2="732.54" y2="678.98" stroke="#3cb4b4" stroke-width="1.1"/>
<line x1="741.63" y1="674.9" x2="741.63" y2="679.82" stroke="#3cb4b4" stroke-width="1.1"/>
<line x1="750.72" y1="674.9" x2="750.72" y2="679.75" stroke="#3cb4b4" stroke-width="1.1"/>
<line x1="759.8" y1="674.9" x2="759.8" y2="679.88" stroke="#3cb4b4" stroke-width="1.1"/>
<line x1="768.89" y1="674.9" x2="768.89" y2="679.62" stroke="#3cb4b4" stroke-width="1.1"/>
<line x1="777.98" y1="674.9" x2="777.98" y2="678.29" stroke="#3cb4b4" stroke-width="1.1"/>
<line x1="787.07" y1="674.9" x2="787.07" y2="675.95" stroke="#3cb4b4" stroke-width="1.1"/>
<line x1="796.16" y1="674.9" x2="796.16" y2="675.87" stroke="#3cb4b4" stroke-width="1.1"/>
<line x1="805.24" y1="674.9" x2="805.24" y2="676.88" stroke="#3cb4b4" stroke-width="1.1"/>
<line x1="814.33" y1="674.9" x2="814.33" y2="677.2" stroke="#3cb4b4" stroke-width="1.1"/>
<line x1="823.42" y1="674.9" x2="823.42" y2="676.43" stroke="#3cb4b4" stroke-width="1.1"/>
<line x1="832.51" y1="674.9" x2="832.51" y2="675.45" stroke="#3cb4b4" stroke-width="1.1"/>
<line x1="841.6" y1="674.9" x2="841.6" y2="675.59" stroke="#3cb4b4" stroke-width="1.1"/>
<line x1="850.68" y1="674.9" x2="850.68" y2="675.34" stroke="#3cb4b4" stroke-width="1.1"/>
<line x1="859.77" y1="674.9" x2="859.77" y2="675.19" stroke="#3cb4b4" stroke-width="1.1"/>
<line x1="868.86" y1="674.9" x2="868.86" y2="674.73" stroke="#d03030" stroke-width="1.1"/>
<line x1="877.95" y1="674.9" x2="877.95" y2="674.85" stroke="#d03030" stroke-width="1.1"/>
<line x1="887.04" y1="674.9" x2="887.04" y2="673.75" stroke="#d03030" stroke-width="1.1"/>
<line x1="896.12" y1="674.9" x2="896.12" y2="672.31" stroke="#d03030" stroke-width="1.1"/>
<line x1="905.21" y1="674.9" x2="905.21" y2="669.98" stroke="#d03030" stroke-width="1.1"/>
<line x1="914.3" y1="674.9" x2="914.3" y2="670.13" stroke="#d03030" stroke-width="1.1"/>
<line x1="923.39" y1="674.9" x2="923.39" y2="671.13" stroke="#d03030" stroke-width="1.1"/>
<line x1="932.48" y1="674.9" x2="932.48" y2="672.17" stroke="#d03030" stroke-width="1.1"/>
<line x1="941.56" y1="674.9" x2="941.56" y2="672.68" stroke="#d03030" stroke-width="1.1"/>
<line x1="950.65" y1="674.9" x2="950.65" y2="672.62" stroke="#d03030" stroke-width="1.1"/>
<line x1="959.74" y1="674.9" x2="959.74" y2="673.6" stroke="#d03030" stroke-width="1.1"/>
<line x1="968.83" y1="674.9" x2="968.83" y2="675.92" stroke="#3cb4b4" stroke-width="1.1"/>
<line x1="977.92" y1="674.9" x2="977.92" y2="676.94" stroke="#3cb4b4" stroke-width="1.1"/>
<line x1="987" y1="674.9" x2="987" y2="678.13" stroke="#3cb4b4" stroke-width="1.1"/>
<line x1="996.09" y1="674.9" x2="996.09" y2="679.69" stroke="#3cb4b4" stroke-width="1.1"/>
<line x1="1005.18" y1="674.9" x2="1005.18" y2="681.69" stroke="#3cb4b4" stroke-width="1.1"/>
<line x1="1014.27" y1="674.9" x2="1014.27" y2="683.68" stroke="#3cb4b4" stroke-width="1.1"/>
<line x1="1023.36" y1="674.9" x2="1023.36" y2="683.98" stroke="#3cb4b4" stroke-width="1.1"/>
<line x1="1032.44" y1="674.9" x2="1032.44" y2="683.6" stroke="#3cb4b4" stroke-width="1.1"/>
<line x1="1041.53" y1="674.9" x2="1041.53" y2="682.56" stroke="#3cb4b4" stroke-width="1.1"/>
<line x1="1050.62" y1="674.9" x2="1050.62" y2="682.24" stroke="#3cb4b4" stroke-width="1.1"/>
<line x1="1059.71" y1="674.9" x2="1059.71" y2="681.59" stroke="#3cb4b4" stroke-width="1.1"/>
<line x1="1068.8" y1="674.9" x2="1068.8" y2="680.46" stroke="#3cb4b4" stroke-width="1.1"/>
<line x1="1077.88" y1="674.9" x2="1077.88" y2="679.23" stroke="#3cb4b4" stroke-width="1.1"/>
<line x1="1086.97" y1="674.9" x2="1086.97" y2="678.65" stroke="#3cb4b4" stroke-width="1.1"/>
<line x1="1096.06" y1="674.9" x2="1096.06" y2="677.41" stroke="#3cb4b4" stroke-width="1.1"/>
<line x1="1105.15" y1="674.9" x2="1105.15" y2="676.9" stroke="#3cb4b4" stroke-width="1.1"/>
<line x1="1114.24" y1="674.9" x2="1114.24" y2="676.89" stroke="#3cb4b4" stroke-width="1.1"/>
<line x1="1123.32" y1="674.9" x2="1123.32" y2="677.37" stroke="#3cb4b4" stroke-width="1.1"/>
<line x1="1132.41" y1="674.9" x2="1132.41" y2="677.02" stroke="#3cb4b4" stroke-width="1.1"/>
<line x1="1141.5" y1="674.9" x2="1141.5" y2="677.07" stroke="#3cb4b4" stroke-width="1.1"/>
<line x1="1150.59" y1="674.9" x2="1150.59" y2="676.53" stroke="#3cb4b4" stroke-width="1.1"/>
<line x1="1159.68" y1="674.9" x2="1159.68" y2="676.37" stroke="#3cb4b4" stroke-width="1.1"/>
<line x1="1168.76" y1="674.9" x2="1168.76" y2="676.05" stroke="#3cb4b4" stroke-width="1.1"/>
<line x1="1177.85" y1="674.9" x2="1177.85" y2="675.32" stroke="#3cb4b4" stroke-width="1.1"/>
<polyline points="5.5,650.62 14.59,649.15 23.68,648.6 32.76,648.79 41.85,649.52 50.94,650.68 60.03,652.2 69.12,654.03 78.2,656.57 87.29,659.02 96.38,661.17 105.47,663.1 114.56,664.86 123.64,666.35 132.73,667.7 141.82,669.01 150.91,670.28 160,671.36 169.08,672.3 178.17,673.2 187.26,673.95 196.35,674.73 205.44,675.52 214.52,676.38 223.61,677.16 232.7,677.75 241.79,677.98 250.88,677.85 259.96,677.49 269.05,677.06 278.14,676.52 287.23,676.02 296.32,675.54 305.4,675.2 314.49,674.77 323.58,674.37 332.67,673.9 341.76,673.24 350.84,672.61 359.93,672.25 369.02,672.03 378.11,671.9 387.2,671.71 396.28,671.51 405.37,671.2 414.46,670.72 423.55,670.17 432.64,669.61 441.72,669.13 450.81,668.74 459.9,668.56 468.99,668.49 478.08,668.57 487.16,668.84 496.25,669.23 505.34,669.71 514.43,670.33 523.52,671.13 532.6,671.91 541.69,672.57 550.78,673.05 559.87,673.3 568.96,673.26 578.04,673.16 587.13,672.9 596.22,672.6 605.31,671.65 614.4,670.08 623.48,668.68 632.57,667.69 641.66,666.99 650.75,666.65 659.84,666.6 668.92,666.75 678.01,667.02 687.1,667.27 696.19,667.58 705.28,667.95 714.36,668.44 723.45,668.91 732.54,669.42 741.63,670.04 750.72,670.64 759.8,671.26 768.89,671.85 777.98,672.28 787.07,672.41 796.16,672.53 805.24,672.78 814.33,673.06 823.42,673.26 832.51,673.32 841.6,673.41 850.68,673.47 859.77,673.5 868.86,673.48 877.95,673.47 887.04,673.33 896.12,673.01 905.21,672.39 914.3,671.8 923.39,671.32 932.48,670.98 941.56,670.71 950.65,670.42 959.74,670.26 968.83,670.39 977.92,670.64 987,671.05 996.09,671.64 1005.18,672.49 1014.27,673.59 1023.36,674.73 1032.44,675.81 1041.53,676.77 1050.62,677.69 1059.71,678.53 1068.8,679.22 1077.88,679.76 1086.97,680.23 1096.06,680.54 1105.15,680.79 1114.24,681.04 1123.32,681.35 1132.41,681.62 1141.5,681.89 1150.59,682.09 1159.68,682.28 1168.76,682.42 1177.85,682.47" fill="none" stroke="#a8a800" stroke-width="1.0" stroke-linejoin="round"/>
<polyline points="5.5,641.62 14.59,643.29 23.68,646.41 32.76,649.52 41.85,652.47 50.94,655.29 60.03,658.27 69.12,661.36 78.2,666.74 87.29,668.8 96.38,669.77 105.47,670.82 114.56,671.92 123.64,672.3 132.73,673.09 141.82,674.23 150.91,675.37 160,675.7 169.08,676.03 178.17,676.8 187.26,676.98 196.35,677.86 205.44,678.67 214.52,679.84 223.61,680.27 232.7,680.08 241.79,678.9 250.88,677.34 259.96,676.05 269.05,675.32 278.14,674.4 287.23,674 296.32,673.61 305.4,673.83 314.49,673.09 323.58,672.73 332.67,672.03 341.76,670.61 350.84,670.09 359.93,670.8 369.02,671.13 378.11,671.41 387.2,670.94 396.28,670.73 405.37,669.94 414.46,668.81 423.55,667.99 432.64,667.37 441.72,667.2 450.81,667.17 459.9,667.85 468.99,668.22 478.08,668.86 487.16,669.96 496.25,670.8 505.34,671.64 514.43,672.81 523.52,674.34 532.6,675 541.69,675.23 550.78,674.97 559.87,674.3 568.96,673.11 578.04,672.77 587.13,671.84 596.22,671.4 605.31,667.82 614.4,663.83 623.48,663.1 632.57,663.69 641.66,664.19 650.75,665.28 659.84,666.44 668.92,667.31 678.01,668.13 687.1,668.26 696.19,668.8 705.28,669.46 714.36,670.4 723.45,670.77 732.54,671.46 741.63,672.5 750.72,673.07 759.8,673.76 768.89,674.22 777.98,673.97 787.07,672.93 796.16,673.01 805.24,673.77 814.33,674.21 823.42,674.02 832.51,673.6 841.6,673.75 850.68,673.69 859.77,673.64 868.86,673.4 877.95,673.45 887.04,672.76 896.12,671.71 905.21,669.93 914.3,669.41 923.39,669.44 932.48,669.62 941.56,669.6 950.65,669.28 959.74,669.61 968.83,670.9 977.92,671.66 987,672.66 996.09,674.04 1005.18,675.89 1014.27,677.98 1023.36,679.27 1032.44,680.16 1041.53,680.6 1050.62,681.36 1059.71,681.87 1068.8,682 1077.88,681.93 1086.97,682.11 1096.06,681.8 1105.15,681.79 1114.24,682.04 1123.32,682.59 1132.41,682.68 1141.5,682.97 1150.59,682.91 1159.68,683.01 1168.76,682.99 1177.85,682.68" fill="none" stroke="#b4b4b4" stroke-width="1.0" stroke-linejoin="round"/>
<rect x="1280" y="96" width="10.61" height="1.2" fill="#6e6e6e"/>
<rect x="1280" y="99.12" width="29.36" height="1.2" fill="#6e6e6e"/>
<rect x="1280" y="102.24" width="48.11" height="1.2" fill="#6e6e6e"/>
<rect x="1280" y="105.36" width="66.87" height="1.2" fill="#6e6e6e"/>
<rect x="1280" y="108.48" width="85.62" height="1.2" fill="#6e6e6e"/>
<rect x="1280" y="111.6" width="104.37" height="1.2" fill="#6e6e6e"/>
<rect x="1280" y="114.72" width="123.1" height="1.2" fill="#6e6e6e"/>
<rect x="1280" y="117.84" width="139.35" height="1.2" fill="#6e6e6e"/>
<rect x="1280" y="120.96" width="155.6" height="1.2" fill="#6e6e6e"/>
<rect x="1280" y="124.08" width="171.85" height="1.2" fill="#6e6e6e"/>
<rect x="1280" y="127.2" width="166.08" height="1.2" fill="#6e6e6e"/>
<rect x="1280" y="130.32" width="128" height="1.2" fill="#6e6e6e"/>
<rect x="1408" y="130.32" width="30.63" height="1.2" fill="#007a7a"/>
<rect x="1280" y="133.44" width="109.11" height="1.2" fill="#6e6e6e"/>
<rect x="1389.11" y="133.44" width="56.6" height="1.2" fill="#007a7a"/>
<rect x="1280" y="136.56" width="91.36" height="1.2" fill="#6e6e6e"/>
<rect x="1371.36" y="136.56" width="82.33" height="1.2" fill="#007a7a"/>
<rect x="1280" y="139.68" width="70.68" height="1.2" fill="#6e6e6e"/>
<rect x="1350.68" y="139.68" width="110.98" height="1.2" fill="#007a7a"/>
<rect x="1280" y="142.8" width="52.8" height="1.2" fill="#6e6e6e"/>
<rect x="1332.8" y="142.8" width="136.83" height="1.2" fill="#007a7a"/>
<rect x="1280" y="145.92" width="47.38" height="1.2" fill="#6e6e6e"/>
<rect x="1327.38" y="145.92" width="165.76" height="1.2" fill="#007a7a"/>
<rect x="1280" y="149.04" width="45.28" height="1.2" fill="#6e6e6e"/>
<rect x="1325.28" y="149.04" width="193.03" height="1.2" fill="#007a7a"/>
<rect x="1280" y="155.28" width="52.65" height="1.2" fill="#6e6e6e"/>
<rect x="1332.65" y="155.28" width="179.14" height="1.2" fill="#007a7a"/>
<rect x="1280" y="158.4" width="64.47" height="1.2" fill="#6e6e6e"/>
<rect x="1344.47" y="158.4" width="152.42" height="1.2" fill="#007a7a"/>
<rect x="1280" y="161.52" width="56.01" height="1.2" fill="#6e6e6e"/>
<rect x="1336.01" y="161.52" width="124.73" height="1.2" fill="#007a7a"/>
<rect x="1280" y="164.64" width="38.94" height="1.2" fill="#6e6e6e"/>
<rect x="1318.94" y="164.64" width="101.58" height="1.2" fill="#007a7a"/>
<rect x="1280" y="167.76" width="20.04" height="1.2" fill="#6e6e6e"/>
<rect x="1300.04" y="167.76" width="73.2" height="1.2" fill="#007a7a"/>
<rect x="1280" y="170.88" width="5.24" height="1.2" fill="#6e6e6e"/>
<rect x="1285.24" y="170.88" width="35.25" height="1.2" fill="#007a7a"/>
<rect x="1280" y="152.1" width="244" height="1.3" fill="#d06a1e"/>
<rect x="1403" y="166.6" width="121" height="1" fill="#8a8a8a"/>
<polyline points="1280.6,92.6 1284,94.9 1403,114.7 1453,124.3 1438.2,130.5 1470.4,143.1 1520.4,149.3 1524.1,152.7 1494.5,158.9 1403,166 1310,171.5" fill="none" stroke="#e8e8e8" stroke-width="1.2"/>
<polyline points="1310,171.5 1280,175.2" fill="none" stroke="#e02020" stroke-width="1.2"/>
<rect x="1280" y="200" width="1.27" height="1.1" fill="#b01010"/>
<rect x="1280" y="203.12" width="2.33" height="1.1" fill="#b01010"/>
<rect x="1280" y="206.24" width="3.39" height="1.1" fill="#b01010"/>
<rect x="1280" y="209.36" width="4.45" height="1.1" fill="#b01010"/>
<rect x="1280" y="212.48" width="6.41" height="1.1" fill="#b01010"/>
<rect x="1280" y="215.6" width="11.51" height="1.1" fill="#b01010"/>
<rect x="1280" y="218.72" width="28.75" height="1.1" fill="#b01010"/>
<rect x="1280" y="221.84" width="58.96" height="1.1" fill="#b01010"/>
<rect x="1280" y="224.96" width="86.9" height="1.1" fill="#b01010"/>
<rect x="1280" y="228.08" width="111.89" height="1.1" fill="#b01010"/>
<rect x="1280" y="231.2" width="136.89" height="1.1" fill="#b01010"/>
<rect x="1280" y="234.32" width="145.55" height="1.1" fill="#b01010"/>
<rect x="1280" y="237.44" width="139.28" height="1.1" fill="#b01010"/>
<rect x="1280" y="240.56" width="124.05" height="1.1" fill="#b01010"/>
<rect x="1280" y="243.68" width="97.78" height="1.1" fill="#b01010"/>
<rect x="1280" y="246.8" width="71.52" height="1.1" fill="#b01010"/>
<rect x="1280" y="249.92" width="45.25" height="1.1" fill="#b01010"/>
<rect x="1280" y="253.04" width="42.09" height="1.1" fill="#b01010"/>
<rect x="1280" y="256.16" width="49.51" height="1.1" fill="#b01010"/>
<rect x="1280" y="259.28" width="48.93" height="1.1" fill="#b01010"/>
<rect x="1280" y="262.4" width="42.32" height="1.1" fill="#b01010"/>
<rect x="1280" y="265.52" width="44.01" height="1.1" fill="#b01010"/>
<rect x="1280" y="268.64" width="43.95" height="1.1" fill="#b01010"/>
<rect x="1280" y="271.76" width="36.4" height="1.1" fill="#b01010"/>
<rect x="1280" y="274.88" width="30" height="1.1" fill="#b01010"/>
<rect x="1280" y="278" width="30" height="1.1" fill="#b01010"/>
<rect x="1280" y="281.12" width="30.52" height="1.1" fill="#b01010"/>
<rect x="1280" y="284.24" width="33.64" height="1.1" fill="#b01010"/>
<rect x="1280" y="287.36" width="36.76" height="1.1" fill="#b01010"/>
<rect x="1280" y="290.48" width="33.93" height="1.1" fill="#b01010"/>
<rect x="1280" y="293.6" width="27.06" height="1.1" fill="#b01010"/>
<rect x="1280" y="296.72" width="15.65" height="1.1" fill="#b01010"/>
<rect x="1280" y="299.84" width="4.24" height="1.1" fill="#b01010"/>
<polyline points="1280,196.25 1284.5,209.5 1287,213.4 1295,217.3 1356,223.6 1424.9,232.2 1425.6,234.5 1415.5,239.2 1317,250.9 1332.7,257.5 1320.2,263.4 1327.2,267.3 1310,274.4 1310,280.6 1317.8,288.4 1309.25,293 1280,301" fill="none" stroke="#f01818" stroke-width="1.3"/>
<rect x="1347.5" y="600.6" width="170.4" height="16.3" fill="none" stroke="#d8d8d8" stroke-width="1.1"/>
<rect x="1347.5" y="600.6" width="52" height="16.3" fill="none" stroke="#c01010" stroke-width="1.3"/>
<rect x="996.8" y="433" width="1" height="15.6" fill="#353a44"/>
<rect x="69.9" y="413.8" width="16.9" height="16.2" fill="#0b5e38"/>
<rect x="578.8" y="413.8" width="16.9" height="16.2" fill="#0d3a8a"/>
<rect x="796.9" y="413.8" width="16.8" height="16.2" fill="#0b5e38"/>
<rect x="979" y="413.8" width="16.4" height="16.2" fill="#0d3a8a"/>
<rect x="1124" y="413.8" width="17" height="16.2" fill="#b3121c"/>
<path d="M34.4,760 L37.3,755.5 L40.2,760" fill="none" stroke="#d8d8d8" stroke-width="1.1"/>
<path d="M1256.2,753.6 L1260.8,757.1 L1256.2,760.6 M1265.4,753.6 L1270,757.1 L1265.4,760.6" fill="none" stroke="#d8d8d8" stroke-width="1.1"/>
<path d="M207.2,28.2 V38.8 M205,35.8 L207.2,38.8 L209.4,35.8" fill="none" stroke="#3cd2d2" stroke-width="1.2"/>
<path d="M293.2,28.2 V38.8 M291,35.8 L293.2,38.8 L295.4,35.8" fill="none" stroke="#3cd2d2" stroke-width="1.2"/>
<path d="M379.2,28.2 V38.8 M377,35.8 L379.2,38.8 L381.4,35.8" fill="none" stroke="#3cd2d2" stroke-width="1.2"/>
<path d="M464.5,28.2 V38.8 M462.3,35.8 L464.5,38.8 L466.7,35.8" fill="none" stroke="#3cd2d2" stroke-width="1.2"/>
<path d="M184.2,464.4 V455.2 M182,458.2 L184.2,455.2 L186.4,458.2" fill="none" stroke="#f03a3a" stroke-width="1.2"/>
<path d="M309.2,464.4 V455.2 M307,458.2 L309.2,455.2 L311.4,458.2" fill="none" stroke="#f03a3a" stroke-width="1.2"/>
<path d="M435.6,464.4 V455.2 M433.4,458.2 L435.6,455.2 L437.8,458.2" fill="none" stroke="#f03a3a" stroke-width="1.2"/>
<path d="M158,601 V591.5 M155.8,594.5 L158,591.5 L160.2,594.5" fill="none" stroke="#f03a3a" stroke-width="1.2"/>
<path d="M230.3,591.5 V601 M228.1,598 L230.3,601 L232.5,598" fill="none" stroke="#3cd2d2" stroke-width="1.2"/>
<path d="M318.2,601 V591.5 M316,594.5 L318.2,591.5 L320.4,594.5" fill="none" stroke="#f03a3a" stroke-width="1.2"/>
<rect x="6.8" y="7.8" width="10" height="9.5" rx="1" fill="none" stroke="#7a7a7a" stroke-width="1.6"/>
<rect x="11.5" y="10" width="3.2" height="4.7" fill="#8a8a8a"/>
<rect x="1199.2" y="30.4" width="9.8" height="8.6" rx="1" fill="none" stroke="#6e6e6e" stroke-width="1.6"/>
<rect x="1203.8" y="32.2" width="3.2" height="4.8" fill="#7a7a7a"/>
<path d="M6,216.3 L9,219.4 L6,222.5 M9.8,216.3 L12.8,219.4 L9.8,222.5" fill="none" stroke="#8a8a8a" stroke-width="1"/>
<circle cx="1095.6" cy="460.2" r="8.3" fill="none" stroke="#a8a8a8" stroke-width="1.3"/><path d="M1092.9,458 a2.7,2.7 0 1 1 3.6,2.5 c-0.8,0.4 -0.9,1 -0.9,2" fill="none" stroke="#a8a8a8" stroke-width="1.5"/><circle cx="1095.6" cy="464.6" r="0.95" fill="#a8a8a8"/><circle cx="1120.6" cy="459.4" r="7.3" fill="none" stroke="#a8a8a8" stroke-width="1.3"/><path d="M1125.9,464.7 L1129.4,468.2" fill="none" stroke="#a8a8a8" stroke-width="1.6" stroke-linecap="round"/><path d="M1117.1,459.4 h7 M1120.6,455.9 v7" fill="none" stroke="#a8a8a8" stroke-width="1.6"/><polygon points="1145.26,455.23 1145.37,453.14 1148.23,453.14 1148.34,455.23 1150.33,456.39 1152.2,455.43 1153.63,457.91 1151.87,459.05 1151.87,461.35 1153.63,462.49 1152.2,464.97 1150.33,464.01 1148.34,465.17 1148.23,467.26 1145.37,467.26 1145.26,465.17 1143.27,464.01 1141.4,464.97 1139.97,462.49 1141.73,461.35 1141.73,459.05 1139.97,457.91 1141.4,455.43 1143.27,456.39" fill="none" stroke="#a8a8a8" stroke-width="1.3" stroke-linejoin="round"/><circle cx="1146.8" cy="460.2" r="2.4" fill="none" stroke="#a8a8a8" stroke-width="1.3"/><path d="M1179.9,462.8 V459 Q1179.9,455.3 1176.3,455.3 H1166.5 M1169.7,452.1 L1166.4,455.3 L1169.7,458.5" fill="none" stroke="#a8a8a8" stroke-width="1.5" stroke-linejoin="round" stroke-linecap="round"/><path d="M1165,458 V461.8 Q1165,465.5 1168.6,465.5 H1178.5 M1175.3,462.3 L1178.6,465.5 L1175.3,468.7" fill="none" stroke="#a8a8a8" stroke-width="1.5" stroke-linejoin="round" stroke-linecap="round"/><circle cx="1197.8" cy="460.2" r="8.3" fill="none" stroke="#a8a8a8" stroke-width="1.3"/><path d="M1193.7,456.1 l8.2,8.2 M1201.9,456.1 l-8.2,8.2" fill="none" stroke="#a8a8a8" stroke-width="1.3"/>
<circle cx="1095.6" cy="596.4" r="8.3" fill="none" stroke="#a8a8a8" stroke-width="1.3"/><path d="M1092.9,594.2 a2.7,2.7 0 1 1 3.6,2.5 c-0.8,0.4 -0.9,1 -0.9,2" fill="none" stroke="#a8a8a8" stroke-width="1.5"/><circle cx="1095.6" cy="600.8" r="0.95" fill="#a8a8a8"/><circle cx="1120.6" cy="595.6" r="7.3" fill="none" stroke="#a8a8a8" stroke-width="1.3"/><path d="M1125.9,600.9 L1129.4,604.4" fill="none" stroke="#a8a8a8" stroke-width="1.6" stroke-linecap="round"/><path d="M1117.1,595.6 h7 M1120.6,592.1 v7" fill="none" stroke="#a8a8a8" stroke-width="1.6"/><polygon points="1145.26,591.43 1145.37,589.34 1148.23,589.34 1148.34,591.43 1150.33,592.59 1152.2,591.63 1153.63,594.11 1151.87,595.25 1151.87,597.55 1153.63,598.69 1152.2,601.17 1150.33,600.21 1148.34,601.37 1148.23,603.46 1145.37,603.46 1145.26,601.37 1143.27,600.21 1141.4,601.17 1139.97,598.69 1141.73,597.55 1141.73,595.25 1139.97,594.11 1141.4,591.63 1143.27,592.59" fill="none" stroke="#a8a8a8" stroke-width="1.3" stroke-linejoin="round"/><circle cx="1146.8" cy="596.4" r="2.4" fill="none" stroke="#a8a8a8" stroke-width="1.3"/><path d="M1179.9,599 V595.2 Q1179.9,591.5 1176.3,591.5 H1166.5 M1169.7,588.3 L1166.4,591.5 L1169.7,594.7" fill="none" stroke="#a8a8a8" stroke-width="1.5" stroke-linejoin="round" stroke-linecap="round"/><path d="M1165,594.2 V598 Q1165,601.7 1168.6,601.7 H1178.5 M1175.3,598.5 L1178.6,601.7 L1175.3,604.9" fill="none" stroke="#a8a8a8" stroke-width="1.5" stroke-linejoin="round" stroke-linecap="round"/><circle cx="1197.8" cy="596.4" r="8.3" fill="none" stroke="#a8a8a8" stroke-width="1.3"/><path d="M1193.7,592.3 l8.2,8.2 M1201.9,592.3 l-8.2,8.2" fill="none" stroke="#a8a8a8" stroke-width="1.3"/>
<rect x="1424.5" y="3.6" width="16.6" height="16.6" fill="#2a1d14" stroke="#e01010" stroke-width="1.5"/>
<rect x="1426" y="5.5" width="4" height="1.4" fill="#3aa8d8"/><rect x="1426" y="7.8" width="7.5" height="1.4" fill="#3aa8d8"/><rect x="1426" y="10" width="9.5" height="1.3" fill="#e8e8e8"/>
<rect x="1426" y="12.2" width="4.5" height="1" fill="#d02020"/><rect x="1426" y="14.4" width="3" height="1" fill="#d02020"/><rect x="1426" y="16.6" width="3" height="1" fill="#d02020"/>
<circle cx="1435" cy="15" r="3.6" fill="#e8b070"/><circle cx="1435" cy="15" r="1.4" fill="#6a5a40"/>
<rect x="1447" y="5.3" width="4" height="1.3" fill="#10b010"/><rect x="1447" y="7.2" width="7.5" height="1.3" fill="#10b010"/><rect x="1447" y="9" width="11.5" height="1.6" fill="#10b010"/>
<rect x="1447" y="11" width="7.5" height="1.3" fill="#c01818"/><rect x="1447" y="12.9" width="4.5" height="1.3" fill="#c01818"/><rect x="1447" y="14.8" width="4" height="1.2" fill="#d0d0d0"/><rect x="1447" y="16.6" width="2.2" height="1.2" fill="#d0d0d0"/>
<path d="M1464.5,5.2 L1466.5,5.2 L1474,11.5 L1466,18.2 L1464.5,18.2 Z" fill="#f03030"/><path d="M1466.5,8.3 L1470.3,11.5 L1466.5,14.8 Z" fill="#ffee00"/>
<path d="M1484.6,5.2 L1486.6,5.2 L1494,11.5 L1486,18.2 L1484.6,18.2 Z" fill="#10d010"/><path d="M1486.6,8.3 L1490.3,11.5 L1486.6,14.8 Z" fill="#1010ff"/>
<rect x="1501.5" y="4.2" width="15.2" height="13.8" fill="#e4e4e4"/><path d="M1503,11 q2,-5 8,-5.5 l4.5,0 v6 q-5,2 -12.5,1.5z" fill="#2222dd"/><path d="M1509.5,7 L1515,7 L1514,11.5 Z" fill="#ffee00"/><path d="M1503,9.5 q1.5,-1 3.5,0.5 v3 h-3.5z" fill="#20b8b8"/><rect x="1504" y="14.2" width="10.5" height="2" fill="#3a3ae0"/>
<text x="29.8" y="18.4" textLength="25.2" lengthAdjust="spacingAndGlyphs" fill="#c8c8c8" font-size="13">分时</text>
<text x="68" y="18.4" textLength="31.5" lengthAdjust="spacingAndGlyphs" fill="#c8c8c8" font-size="13">1分钟</text>
<text x="112.6" y="18.4" textLength="32.4" lengthAdjust="spacingAndGlyphs" fill="#c8c8c8" font-size="13">5分钟</text>
<text x="157.8" y="18.4" textLength="39.6" lengthAdjust="spacingAndGlyphs" fill="#c8c8c8" font-size="13">15分钟</text>
<text x="210" y="18.4" textLength="39.5" lengthAdjust="spacingAndGlyphs" fill="#c8c8c8" font-size="13">30分钟</text>
<text x="262" y="18.4" textLength="39" lengthAdjust="spacingAndGlyphs" fill="#c8c8c8" font-size="13">60分钟</text>
<text x="314.7" y="18.4" textLength="39.3" lengthAdjust="spacingAndGlyphs" fill="#c8c8c8" font-size="13">90分钟</text>
<text x="367" y="18.4" textLength="46.7" lengthAdjust="spacingAndGlyphs" fill="#c8c8c8" font-size="13">120分钟</text>
<text x="464.5" y="18.4" textLength="25.5" lengthAdjust="spacingAndGlyphs" fill="#c8c8c8" font-size="13">周线</text>
<text x="502.7" y="18.4" textLength="25.3" lengthAdjust="spacingAndGlyphs" fill="#c8c8c8" font-size="13">月线</text>
<text x="540.6" y="18.4" textLength="25.4" lengthAdjust="spacingAndGlyphs" fill="#c8c8c8" font-size="13">季线</text>
<text x="579" y="18.4" textLength="25" lengthAdjust="spacingAndGlyphs" fill="#c8c8c8" font-size="13">年线</text>
<text x="617" y="18.4" textLength="37" lengthAdjust="spacingAndGlyphs" fill="#c8c8c8" font-size="13">多周期</text>
<text x="667" y="18.4" textLength="50.7" lengthAdjust="spacingAndGlyphs" fill="#c8c8c8" font-size="13">周期设置</text>
<text x="867.2" y="18.4" textLength="24.5" lengthAdjust="spacingAndGlyphs" fill="#c8c8c8" font-size="13">显示</text>
<text x="904.8" y="18.4" textLength="25.2" lengthAdjust="spacingAndGlyphs" fill="#c8c8c8" font-size="13">平移</text>
<text x="942.4" y="18.4" textLength="25.2" lengthAdjust="spacingAndGlyphs" fill="#c8c8c8" font-size="13">训练</text>
<text x="980.9" y="18.4" textLength="24.1" lengthAdjust="spacingAndGlyphs" fill="#c8c8c8" font-size="13">复权</text>
<text x="1017.7" y="18.4" textLength="25.3" lengthAdjust="spacingAndGlyphs" fill="#c8c8c8" font-size="13">叠加</text>
<text x="1055.8" y="18.4" textLength="25.2" lengthAdjust="spacingAndGlyphs" fill="#c8c8c8" font-size="13">画线</text>
<text x="1093.7" y="18.4" textLength="25.5" lengthAdjust="spacingAndGlyphs" fill="#c8c8c8" font-size="13">统计</text>
<text x="1131.5" y="18.4" textLength="25.5" lengthAdjust="spacingAndGlyphs" fill="#c8c8c8" font-size="13">多股</text>
<text x="1170" y="18.7" textLength="21.3" lengthAdjust="spacingAndGlyphs" fill="#c8c8c8" font-size="13.4">F10</text>
<text x="1204.4" y="18.4" textLength="30.2" lengthAdjust="spacingAndGlyphs" fill="#c8c8c8" font-size="13">-自选</text>
<text x="1247" y="18.4" textLength="24.7" lengthAdjust="spacingAndGlyphs" fill="#c8c8c8" font-size="13">返回</text>
<text x="427" y="18.4" textLength="25" lengthAdjust="spacingAndGlyphs" fill="#3cd2d2" font-size="13">日线</text>
<text x="1281" y="17.8" textLength="104" lengthAdjust="spacingAndGlyphs" fill="#e6e6e6" font-size="14">300961深水海纳</text>
<text x="2.3" y="38.4" textLength="124.9" lengthAdjust="spacingAndGlyphs" fill="#c8c8c8" font-size="13">深水海纳(日线,前复权)</text>
<text x="136.5" y="38.7" textLength="63.6" lengthAdjust="spacingAndGlyphs" fill="#e8e8e8" font-size="13.4">MA5:15.98</text>
<text x="214.7" y="38.7" textLength="71.4" lengthAdjust="spacingAndGlyphs" fill="#e6e600" font-size="13.4">MA10:16.27</text>
<text x="300.3" y="38.7" textLength="71.4" lengthAdjust="spacingAndGlyphs" fill="#e600e6" font-size="13.4">MA20:16.64</text>
<text x="385.8" y="38.7" textLength="72.3" lengthAdjust="spacingAndGlyphs" fill="#00e600" font-size="13.4">MA60:18.29</text>
<text x="1223" y="92.3" textLength="32.2" lengthAdjust="spacingAndGlyphs" fill="#c0c0c0" font-size="13.4">24.00</text>
<text x="1223" y="143" textLength="32.2" lengthAdjust="spacingAndGlyphs" fill="#c0c0c0" font-size="13.4">22.00</text>
<text x="1223" y="193.7" textLength="32.2" lengthAdjust="spacingAndGlyphs" fill="#c0c0c0" font-size="13.4">20.00</text>
<text x="1223" y="244.4" textLength="32.2" lengthAdjust="spacingAndGlyphs" fill="#c0c0c0" font-size="13.4">18.00</text>
<text x="1223" y="295.1" textLength="32.2" lengthAdjust="spacingAndGlyphs" fill="#c0c0c0" font-size="13.4">16.00</text>
<text x="1223" y="345.8" textLength="32.2" lengthAdjust="spacingAndGlyphs" fill="#c0c0c0" font-size="13.4">14.00</text>
<text x="1223" y="396.5" textLength="32.2" lengthAdjust="spacingAndGlyphs" fill="#c0c0c0" font-size="13.4">12.00</text>
<text x="1.7" y="445.8" textLength="41.3" lengthAdjust="spacingAndGlyphs" fill="#bdbdbd" font-size="13">2025年</text>
<text x="52" y="446.1" textLength="14.6" lengthAdjust="spacingAndGlyphs" fill="#bdbdbd" font-size="13.4">04</text>
<text x="243" y="446.1" textLength="14.6" lengthAdjust="spacingAndGlyphs" fill="#bdbdbd" font-size="13.4">05</text>
<text x="416.3" y="446.1" textLength="14.6" lengthAdjust="spacingAndGlyphs" fill="#bdbdbd" font-size="13.4">06</text>
<text x="598.3" y="446.1" textLength="14.6" lengthAdjust="spacingAndGlyphs" fill="#bdbdbd" font-size="13.4">07</text>
<text x="807.2" y="446.1" textLength="14.6" lengthAdjust="spacingAndGlyphs" fill="#bdbdbd" font-size="13.4">08</text>
<text x="998.1" y="446.1" textLength="14.6" lengthAdjust="spacingAndGlyphs" fill="#a0a0a0" font-size="13.4">09</text>
<text x="1221.5" y="446.5" textLength="25.9" lengthAdjust="spacingAndGlyphs" fill="#c0c0c0" font-size="13">日线</text>
<text x="72.1" y="427" textLength="12.5" lengthAdjust="spacingAndGlyphs" fill="#ffffff" font-size="12">跌</text>
<text x="581" y="427" textLength="12.5" lengthAdjust="spacingAndGlyphs" fill="#ffffff" font-size="12">股</text>
<text x="799.1" y="427" textLength="12.4" lengthAdjust="spacingAndGlyphs" fill="#ffffff" font-size="12">减</text>
<text x="981.2" y="427" textLength="12" lengthAdjust="spacingAndGlyphs" fill="#ffffff" font-size="12">财</text>
<text x="1126.2" y="427" textLength="12.6" lengthAdjust="spacingAndGlyphs" fill="#ffffff" font-size="12">宗</text>
<text x="640.6" y="105.1" textLength="31.8" lengthAdjust="spacingAndGlyphs" fill="#c8c8c8" font-size="13.4">23.56</text>
<text x="92.5" y="379.9" textLength="29.9" lengthAdjust="spacingAndGlyphs" fill="#c8c8c8" font-size="13.4">12.61</text>
<text x="2" y="464.9" textLength="59.7" lengthAdjust="spacingAndGlyphs" fill="#c8c8c8" font-size="13.4">VOL(5,10)</text>
<text x="65.6" y="464.9" textLength="111.4" lengthAdjust="spacingAndGlyphs" fill="#e8e8e8" font-size="13.4">VOLUME:49958.95</text>
<text x="191.2" y="464.9" textLength="111.3" lengthAdjust="spacingAndGlyphs" fill="#e6e600" font-size="13.4">MAVOL1:46366.85</text>
<text x="316.7" y="464.9" textLength="111.3" lengthAdjust="spacingAndGlyphs" fill="#e600e6" font-size="13.4">MAVOL2:48298.37</text>
<text x="1223.5" y="490.9" textLength="38.2" lengthAdjust="spacingAndGlyphs" fill="#c0c0c0" font-size="13.4">100.00</text>
<text x="1223.5" y="527.4" textLength="31.3" lengthAdjust="spacingAndGlyphs" fill="#c0c0c0" font-size="13.4">50.00</text>
<text x="1223.5" y="563.85" textLength="24" lengthAdjust="spacingAndGlyphs" fill="#c0c0c0" font-size="13.4">0.00</text>
<text x="1215.2" y="578" textLength="18.8" lengthAdjust="spacingAndGlyphs" fill="#c0c0c0" font-size="13">×万</text>
<text x="2" y="601.5" textLength="91" lengthAdjust="spacingAndGlyphs" fill="#c8c8c8" font-size="13.4">MACD(12,26,9)</text>
<text x="97.9" y="601.5" textLength="53.4" lengthAdjust="spacingAndGlyphs" fill="#e8e8e8" font-size="13.4">DIF:-0.69</text>
<text x="165.8" y="601.5" textLength="57.2" lengthAdjust="spacingAndGlyphs" fill="#e6e600" font-size="13.4">DEA:-0.67</text>
<text x="237.6" y="601.5" textLength="72.8" lengthAdjust="spacingAndGlyphs" fill="#e600e6" font-size="13.4">MACD:-0.04</text>
<text x="1223.5" y="634.8" textLength="24" lengthAdjust="spacingAndGlyphs" fill="#c0c0c0" font-size="13.4">4.00</text>
<text x="1223.5" y="680" textLength="24" lengthAdjust="spacingAndGlyphs" fill="#c0c0c0" font-size="13.4">0.00</text>
<text x="8.9" y="741.2" textLength="25.1" lengthAdjust="spacingAndGlyphs" fill="#d0d0d0" font-size="13">指标</text>
<text x="47" y="741.2" textLength="25.3" lengthAdjust="spacingAndGlyphs" fill="#d0d0d0" font-size="13">体系</text>
<text x="83.8" y="741.2" textLength="50.2" lengthAdjust="spacingAndGlyphs" fill="#e0e0e0" font-size="13">经典常用</text>
<text x="1177" y="741.2" textLength="26" lengthAdjust="spacingAndGlyphs" fill="#d0d0d0" font-size="13">管理</text>
<text x="1213.5" y="741.2" textLength="25.7" lengthAdjust="spacingAndGlyphs" fill="#d0d0d0" font-size="13">保存</text>
<text x="1250.5" y="740.5" textLength="7" lengthAdjust="spacingAndGlyphs" fill="#d0d0d0" font-size="13.4">+</text>
<text x="1268.5" y="740.5" textLength="4" lengthAdjust="spacingAndGlyphs" fill="#d0d0d0" font-size="13.4">-</text>
<text x="6.8" y="763.2" textLength="25.2" lengthAdjust="spacingAndGlyphs" fill="#d8d8d8" font-size="13">扩展</text>
<text x="54" y="763.2" textLength="50.2" lengthAdjust="spacingAndGlyphs" fill="#d8d8d8" font-size="13">核心题材</text>
<text x="117" y="763.2" textLength="50.4" lengthAdjust="spacingAndGlyphs" fill="#d8d8d8" font-size="13">所属板块</text>
<text x="180" y="763.2" textLength="51" lengthAdjust="spacingAndGlyphs" fill="#d8d8d8" font-size="13">所属指数</text>
<text x="243.6" y="763.2" textLength="51.1" lengthAdjust="spacingAndGlyphs" fill="#d8d8d8" font-size="13">公司大事</text>
<text x="307.6" y="763.2" textLength="50.4" lengthAdjust="spacingAndGlyphs" fill="#d8d8d8" font-size="13">个股资讯</text>
<text x="370.6" y="763.2" textLength="51" lengthAdjust="spacingAndGlyphs" fill="#d8d8d8" font-size="13">行业资讯</text>
<text x="435.3" y="763.2" textLength="50" lengthAdjust="spacingAndGlyphs" fill="#d8d8d8" font-size="13">个股公告</text>
<text x="498.2" y="763.2" textLength="50.4" lengthAdjust="spacingAndGlyphs" fill="#d8d8d8" font-size="13">研究报告</text>
<text x="561.2" y="763.2" textLength="37.4" lengthAdjust="spacingAndGlyphs" fill="#d8d8d8" font-size="13">问董秘</text>
<text x="1216.2" y="763.2" textLength="37.8" lengthAdjust="spacingAndGlyphs" fill="#d8d8d8" font-size="13">侧边栏</text>
<text x="1286.3" y="763.2" textLength="13.2" lengthAdjust="spacingAndGlyphs" fill="#d8d8d8" font-size="13">笔</text>
<text x="1314.3" y="763.2" textLength="13.2" lengthAdjust="spacingAndGlyphs" fill="#d8d8d8" font-size="13">价</text>
<text x="1341.5" y="763.2" textLength="13.2" lengthAdjust="spacingAndGlyphs" fill="#d8d8d8" font-size="13">势</text>
<text x="1369" y="763.2" textLength="13.2" lengthAdjust="spacingAndGlyphs" fill="#d8d8d8" font-size="13">联</text>
<text x="1396.4" y="763.2" textLength="13.2" lengthAdjust="spacingAndGlyphs" fill="#d8d8d8" font-size="13">主</text>
<text x="1451.5" y="763.2" textLength="13.2" lengthAdjust="spacingAndGlyphs" fill="#d8d8d8" font-size="13">财</text>
<text x="1423.5" y="763.2" textLength="13.2" lengthAdjust="spacingAndGlyphs" fill="#3cd2d2" font-size="13">筹</text>
<text x="1284" y="593.6" textLength="159" lengthAdjust="spacingAndGlyphs" fill="#d8d8d8" font-size="13">成本分布,日期: 20250704</text>
<text x="1284" y="612.6" textLength="57.5" lengthAdjust="spacingAndGlyphs" fill="#d8d8d8" font-size="13">获利比例:</text>
<text x="1284" y="630.9" textLength="146.3" lengthAdjust="spacingAndGlyphs" fill="#d8d8d8" font-size="13">20.83处获利盘: 33.58%</text>
<text x="1284" y="648.6" textLength="126.9" lengthAdjust="spacingAndGlyphs" fill="#d8d8d8" font-size="13">筹码穿透率: 48.94%</text>
<text x="1284" y="666.4" textLength="140.4" lengthAdjust="spacingAndGlyphs" fill="#d8d8d8" font-size="13">新增套牢筹码: 30.22%</text>
<text x="1284" y="684.2" textLength="132.8" lengthAdjust="spacingAndGlyphs" fill="#d8d8d8" font-size="13">新增获利筹码: 0.14%</text>
<text x="1284" y="702.8" textLength="115.7" lengthAdjust="spacingAndGlyphs" fill="#d8d8d8" font-size="13">平均成本: 21.35元</text>
<text x="1284" y="720.2" textLength="216.6" lengthAdjust="spacingAndGlyphs" fill="#d8d8d8" font-size="13">90%成本16.61-22.94,集中度16.0%</text>
<text x="1284" y="738.4" textLength="216.6" lengthAdjust="spacingAndGlyphs" fill="#d8d8d8" font-size="13">70%成本17.83-22.49,集中度11.6%</text>
<text x="1418" y="612.8" textLength="39" lengthAdjust="spacingAndGlyphs" fill="#ffffff" font-size="13.4">30.7%</text>
</svg>
</body></html>
